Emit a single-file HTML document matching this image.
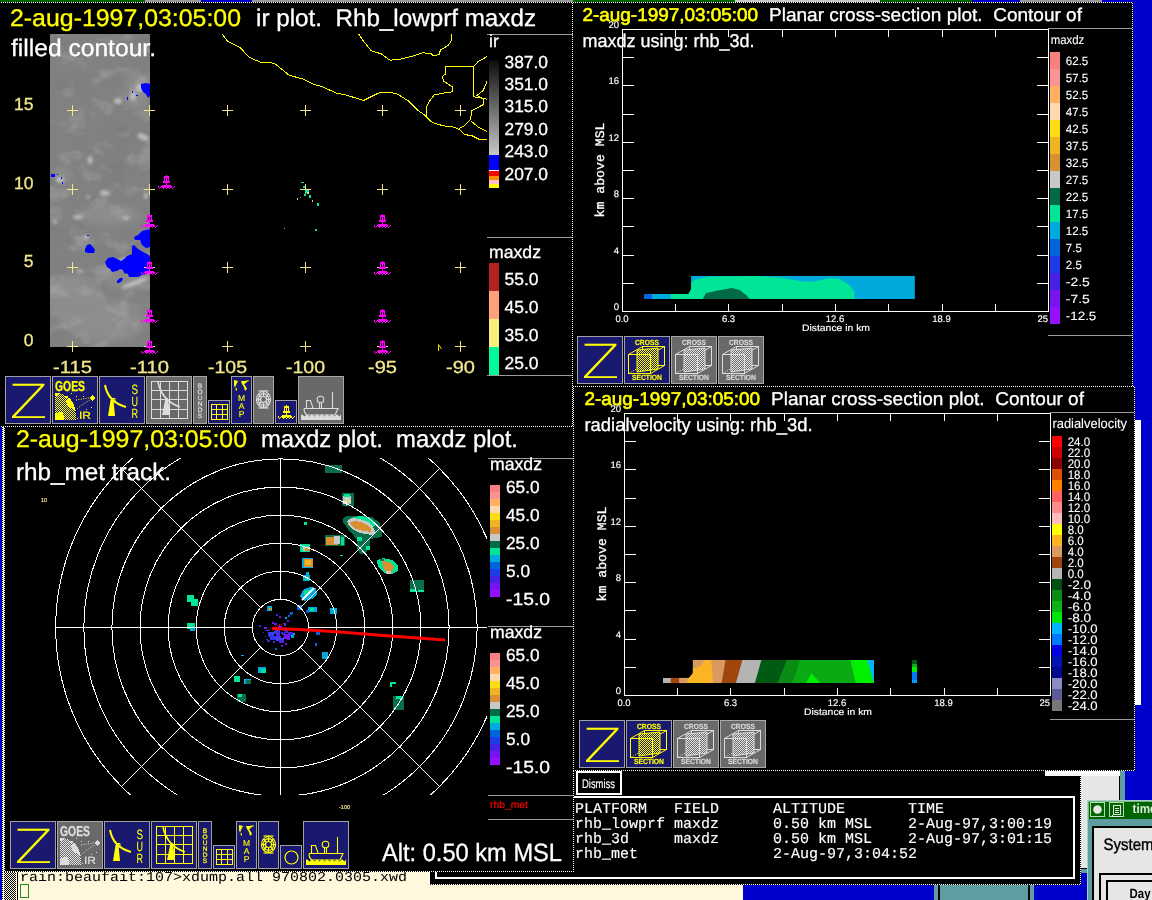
<!DOCTYPE html>
<html><head><meta charset="utf-8"><title>zeb display</title>
<style>
html,body{margin:0;padding:0;background:#0000cd;overflow:hidden}
svg{display:block;will-change:transform}
text{white-space:pre}
</style></head><body>
<svg width="1152" height="900" viewBox="0 0 1152 900" shape-rendering="crispEdges" text-rendering="geometricPrecision">
<rect x="0" y="0" width="1152" height="900" fill="#0000cd" />
<rect x="0" y="0" width="1152" height="2" fill="#9a9a9a" />
<rect x="0" y="0" width="145" height="2" fill="#006400" />
<rect x="201" y="0" width="51" height="2" fill="#0000cd" />
<rect x="573" y="0" width="162" height="2" fill="#006400" />
<rect x="735" y="0" width="145" height="2" fill="#c8c8c8" />
<rect x="880" y="0" width="92" height="2" fill="#006400" />
<rect x="972" y="0" width="48" height="2" fill="#0000cd" />
<rect x="1102" y="0" width="50" height="2" fill="#0000cd" />
<rect x="0" y="869" width="743" height="31" fill="#fff8dc" />
<defs><pattern id="stip" width="2" height="2" patternUnits="userSpaceOnUse"><rect width="2" height="2" fill="#fff8dc"/><rect x="0" y="0" width="1" height="1" fill="#000"/><rect x="1" y="1" width="1" height="1" fill="#000"/></pattern></defs>
<rect x="0" y="869" width="2" height="31" fill="#0000cd" />
<rect x="2" y="869" width="1" height="31" fill="#000" />
<line x1="2.5" x2="2.5" y1="869" y2="900" stroke="#fff" stroke-width="1" stroke-dasharray="1 1"/>
<rect x="3" y="869" width="1" height="31" fill="#fff8dc" />
<rect x="4" y="869" width="12" height="31" fill="url(#stip)" />
<rect x="17" y="869" width="1" height="31" fill="#000" />
<clipPath id="cTerm"><rect x="18" y="872" width="412" height="29"/></clipPath>
<g clip-path="url(#cTerm)"><text x="20" y="881" font-size="13.5" fill="#000" font-family='"Liberation Mono", monospace' textLength="387" lengthAdjust="spacingAndGlyphs" xml:space="preserve">rain:beaufait:107&gt;xdump.all 970802.0305.xwd</text></g>
<rect x="20.5" y="884.5" width="8" height="13" fill="none" stroke="#228b22" stroke-width="1"/>
<rect x="934" y="885" width="100" height="15" fill="#5f9ea0" />
<rect x="938" y="885" width="2" height="15" fill="#000" />
<rect x="1028" y="885" width="2" height="15" fill="#000" />
<rect x="1135" y="420" width="6" height="285" fill="#fff" />
<rect x="430" y="771" width="651" height="114" fill="#000" />
<line x1="429.5" x2="429.5" y1="872" y2="885" stroke="#fff" stroke-width="1" stroke-dasharray="1 1"/>
<line x1="429" x2="1081" y1="884.5" y2="884.5" stroke="#fff" stroke-width="1" stroke-dasharray="1 1"/>
<line x1="1080.5" x2="1080.5" y1="771" y2="885" stroke="#fff" stroke-width="1" stroke-dasharray="1 1"/>
<rect x="1045" y="771" width="77" height="5" fill="#fff" />
<rect x="435" y="796" width="640" height="2" fill="#fff" />
<rect x="435" y="877" width="640" height="2" fill="#fff" />
<rect x="435" y="796" width="2" height="83" fill="#fff" />
<rect x="1073" y="796" width="2" height="83" fill="#fff" />
<rect x="576" y="771" width="46" height="24" fill="#fff" />
<rect x="578" y="773" width="42" height="20" fill="#000" />
<text x="582" y="787.5" font-size="12.5" fill="#fff" font-family='"Liberation Sans", sans-serif' textLength="33" lengthAdjust="spacingAndGlyphs" stroke="#fff" stroke-width="0.15"  xml:space="preserve">Dismiss</text>
<text x="575" y="812.5" font-size="15" fill="#fff" font-family='"Liberation Mono", monospace' textLength="369" lengthAdjust="spacingAndGlyphs" stroke="#fff" stroke-width="0.15"  xml:space="preserve">PLATFORM   FIELD      ALTITUDE       TIME</text>
<text x="575" y="827.5" font-size="15" fill="#fff" font-family='"Liberation Mono", monospace' textLength="477" lengthAdjust="spacingAndGlyphs" stroke="#fff" stroke-width="0.15"  xml:space="preserve">rhb_lowprf maxdz      0.50 km MSL    2-Aug-97,3:00:19</text>
<text x="575" y="842.5" font-size="15" fill="#fff" font-family='"Liberation Mono", monospace' textLength="477" lengthAdjust="spacingAndGlyphs" stroke="#fff" stroke-width="0.15"  xml:space="preserve">rhb_3d     maxdz      0.50 km MSL    2-Aug-97,3:01:15</text>
<text x="575" y="857.5" font-size="15" fill="#fff" font-family='"Liberation Mono", monospace' textLength="342" lengthAdjust="spacingAndGlyphs" stroke="#fff" stroke-width="0.15"  xml:space="preserve">rhb_met               2-Aug-97,3:04:52</text>
<rect x="1081" y="776" width="39" height="92" fill="#e6e6e6" />
<rect x="1119" y="776" width="1" height="92" fill="#000" />
<rect x="1120" y="771" width="5" height="29" fill="#5f9ea0" />
<rect x="1081" y="868" width="7" height="1" fill="#000" />
<rect x="1081" y="869" width="7" height="4" fill="#5f9ea0" />
<rect x="1087" y="800" width="65" height="100" fill="#5f9ea0" />
<rect x="1087" y="800" width="65" height="1" fill="#a8d0d0" />
<rect x="1087" y="800" width="1" height="100" fill="#a8d0d0" />
<rect x="1088" y="801" width="64" height="18" fill="#006400" />
<rect x="1088" y="801" width="64" height="1" fill="#78b478" />
<rect x="1088" y="801" width="1" height="18" fill="#78b478" />
<rect x="1090.5" y="802.5" width="14" height="14" fill="none" stroke="#b4dcb4" stroke-width="1"/><circle cx="1097.5" cy="809.5" r="4.3" fill="#e6e6e6" shape-rendering="auto"/>
<rect x="1109.5" y="802.5" width="14" height="14" fill="none" stroke="#b4dcb4" stroke-width="1"/><path d="M1113.5 805.5 h7 v9 h-7z M1112 814.5 v1.5 h8.5 M1115 808 h4 M1115 810 h4 M1115 812 h4" fill="none" stroke="#e6e6e6" stroke-width="1"/>
<text x="1132.5" y="813" font-size="13" fill="#dcecdc" font-family='"Liberation Sans", sans-serif' textLength="24" lengthAdjust="spacingAndGlyphs" font-weight="bold"  xml:space="preserve">time</text>
<rect x="1092" y="826" width="60" height="74" fill="#000" />
<rect x="1094" y="828" width="58" height="72" fill="#e6e6e6" />
<text x="1103.5" y="850.3" font-size="16.5" fill="#000" font-family='"Liberation Sans", sans-serif' textLength="50" lengthAdjust="spacingAndGlyphs" stroke="#000" stroke-width="0.4"  xml:space="preserve">System</text>
<rect x="1099" y="873" width="53" height="27" fill="#000" />
<rect x="1101" y="875" width="51" height="25" fill="#e6e6e6" />
<rect x="1106" y="880" width="46" height="20" fill="#000" />
<rect x="1108" y="882" width="44" height="18" fill="#e6e6e6" />
<text x="1129.5" y="897.5" font-size="13.5" fill="#000" font-family='"Liberation Sans", sans-serif' textLength="21" lengthAdjust="spacingAndGlyphs" font-weight="bold"  xml:space="preserve">Day</text>
<rect x="0" y="2" width="573" height="424" fill="#000" />
<defs><filter id="bl1" x="-20%" y="-20%" width="140%" height="140%"><feGaussianBlur stdDeviation="1.6"/></filter><filter id="bl2" x="-20%" y="-20%" width="140%" height="140%"><feGaussianBlur stdDeviation="3.5"/></filter><clipPath id="cIR"><rect x="50" y="34" width="100" height="313"/></clipPath><clipPath id="cMap"><rect x="0" y="34" width="487" height="320"/></clipPath></defs>
<rect x="50" y="34" width="100" height="313" fill="#818181" />
<g clip-path="url(#cIR)" shape-rendering="auto">
<g filter="url(#bl2)" fill="#959595" opacity="0.6"><ellipse cx="128" cy="275" rx="26" ry="16"/><ellipse cx="75" cy="300" rx="26" ry="26"/><ellipse cx="105" cy="320" rx="40" ry="22"/><ellipse cx="135" cy="90" rx="14" ry="18"/><ellipse cx="62" cy="175" rx="10" ry="8"/><ellipse cx="110" cy="215" rx="30" ry="10"/></g>
<filter id="nz" x="0" y="0" width="100%" height="100%" color-interpolation-filters="sRGB"><feTurbulence type="fractalNoise" baseFrequency="0.045 0.06" numOctaves="4" seed="11"/><feColorMatrix type="matrix" values="0 0 0 0 0.72  0 0 0 0 0.72  0 0 0 0 0.72  2.6 0 0 0 -1.35"/></filter>
<filter id="nz2" x="0" y="0" width="100%" height="100%" color-interpolation-filters="sRGB"><feTurbulence type="fractalNoise" baseFrequency="0.03 0.04" numOctaves="3" seed="5"/><feColorMatrix type="matrix" values="0 0 0 0 0.42  0 0 0 0 0.42  0 0 0 0 0.42  -2.2 0 0 0 0.95"/></filter>
<rect x="50" y="34" width="100" height="313" filter="url(#nz2)" opacity="0.3"/>
<rect x="50" y="34" width="100" height="313" filter="url(#nz)" opacity="0.45"/>
<g filter="url(#bl1)" fill="#c4c4c4" opacity="0.85"><ellipse cx="118" cy="101" rx="4" ry="3"/><ellipse cx="133" cy="96" rx="3" ry="5"/><ellipse cx="140" cy="88" rx="4" ry="4"/><ellipse cx="143" cy="137" rx="6" ry="3" transform="rotate(25 143 137)"/><ellipse cx="90" cy="160" rx="2.5" ry="4"/><ellipse cx="60" cy="180" rx="4" ry="3"/><ellipse cx="105" cy="193" rx="5" ry="2.5"/><ellipse cx="78" cy="217" rx="5" ry="2"/><ellipse cx="88" cy="197" rx="2" ry="1.5"/><ellipse cx="126" cy="218" rx="3" ry="2"/><ellipse cx="80" cy="271" rx="3" ry="1.6"/><ellipse cx="86" cy="237" rx="3" ry="2"/><ellipse cx="122" cy="262" rx="14" ry="3" transform="rotate(-25 122 262)"/><ellipse cx="135" cy="283" rx="14" ry="2.5" transform="rotate(-20 135 283)"/><ellipse cx="146" cy="196" rx="2" ry="3"/><ellipse cx="55" cy="222" rx="2" ry="2"/></g>
<g fill="#0000ff"><path d="M141 84 L146 83 L150 84 L150 96 L148 98 L146 94 L143 92 L141 88Z"/><rect x="132" y="91" width="1" height="2"/><rect x="136" y="95" width="2" height="1"/><rect x="127" y="97" width="1" height="3"/><rect x="51" y="174" width="4" height="3"/><rect x="57" y="174" width="1" height="1"/><rect x="61" y="177" width="1" height="2"/><rect x="62" y="182" width="1" height="2"/><rect x="87" y="235" width="2" height="1"/><path d="M85 249 L87 245 L90 244 L93 247 L95 250 L94 253 L88 253 L85 252Z"/><path d="M134 237 L138 235 L142 231 L150 229 L150 247 L146 248 L142 245 L140 240 L135 240Z"/><path d="M105 262 L108 258 L113 257 L117 259 L121 261 L124 259 L127 256 L132 254 L132 246 L134 245 L138 249 L143 252 L147 254 L150 256 L150 271 L146 274 L142 275 L138 277 L133 277 L129 277 L128 274 L124 273 L123 270 L120 269 L117 271 L112 272 L110 269 L107 267Z"/><path d="M117 281 L120 278 L123 278 L122 281 L119 283 L117 283Z"/></g>
</g>
<text x="10" y="26" font-size="24" fill="#ffff00" font-family='"Liberation Sans", sans-serif' textLength="231" lengthAdjust="spacingAndGlyphs" stroke="#ffff00" stroke-width="0.3"  xml:space="preserve">2-aug-1997,03:05:00</text>
<text x="256" y="26" font-size="24" fill="#fff" font-family='"Liberation Sans", sans-serif' textLength="280" lengthAdjust="spacingAndGlyphs" stroke="#fff" stroke-width="0.3"  xml:space="preserve">ir plot.  Rhb_lowprf maxdz</text>
<text x="11" y="56" font-size="24" fill="#fff" font-family='"Liberation Sans", sans-serif' textLength="145" lengthAdjust="spacingAndGlyphs" stroke="#fff" stroke-width="0.3"  xml:space="preserve">filled contour.</text>
<g clip-path="url(#cMap)" fill="none" stroke="#ffff00" stroke-width="1" shape-rendering="crispEdges">
<polyline points="222.1,33.8 227.6,41.3 240.2,47.6 249.0,57.2 260.4,62.2 274.2,63.2 289.3,75.3 303.2,79.1 313.2,84.1 322.0,86.6 335.9,92.9 346.0,95.0 363.6,100.5 371.1,96.7 379.9,92.4 390.0,92.2 397.6,94.2 408.9,101.2 417.7,110.1 425.3,115.6 431.6,121.9 437.8,124.4 446.7,126.4 453.0,126.9 459.2,129.4 464.3,134.5 471.8,135.7 479.4,139.5 486.9,139.5"/>
<polyline points="358.5,33.8 363.6,41.3 371.1,50.6 381.2,53.9 390.0,60.2 401.3,59.0 411.4,56.4 422.7,52.7 431.6,53.9 432.8,55.7 439.1,54.7 440.4,50.1 447.9,45.6 450.9,42.1 451.7,33.8"/>
<polyline points="486.9,56.4 483.2,59.0 478.1,61.5 473.8,66.5 445.4,66.5 445.4,74.1 442.1,76.6 444.1,81.6 452.2,86.6 453.0,91.7 444.1,92.9 434.1,95.0 429.0,101.8 426.0,108.0 426.0,116.9 431.6,121.9"/>
<polyline points="473.8,66.5 473.6,96.7 480.6,98.0 486.9,99.2"/>
<polyline points="486.9,81.6 483.2,90.4 476.9,95.5 483.2,98.5 483.9,104.3 471.8,110.6 470.6,119.4 464.3,125.7 458.0,129.4"/>
<polyline points="470.6,120.6 478.1,126.9 486.9,131.5"/>
</g>
<rect x="67" y="110" width="11" height="1" fill="#f0e68c" />
<rect x="72" y="105" width="1" height="11" fill="#f0e68c" />
<rect x="67" y="189" width="11" height="1" fill="#f0e68c" />
<rect x="72" y="184" width="1" height="11" fill="#f0e68c" />
<rect x="67" y="267" width="11" height="1" fill="#f0e68c" />
<rect x="72" y="262" width="1" height="11" fill="#f0e68c" />
<rect x="67" y="346" width="11" height="1" fill="#f0e68c" />
<rect x="72" y="341" width="1" height="11" fill="#f0e68c" />
<rect x="144" y="110" width="11" height="1" fill="#f0e68c" />
<rect x="149" y="105" width="1" height="11" fill="#f0e68c" />
<rect x="144" y="189" width="11" height="1" fill="#f0e68c" />
<rect x="149" y="184" width="1" height="11" fill="#f0e68c" />
<rect x="144" y="267" width="11" height="1" fill="#f0e68c" />
<rect x="149" y="262" width="1" height="11" fill="#f0e68c" />
<rect x="144" y="346" width="11" height="1" fill="#f0e68c" />
<rect x="149" y="341" width="1" height="11" fill="#f0e68c" />
<rect x="222" y="110" width="11" height="1" fill="#f0e68c" />
<rect x="227" y="105" width="1" height="11" fill="#f0e68c" />
<rect x="222" y="189" width="11" height="1" fill="#f0e68c" />
<rect x="227" y="184" width="1" height="11" fill="#f0e68c" />
<rect x="222" y="267" width="11" height="1" fill="#f0e68c" />
<rect x="227" y="262" width="1" height="11" fill="#f0e68c" />
<rect x="222" y="346" width="11" height="1" fill="#f0e68c" />
<rect x="227" y="341" width="1" height="11" fill="#f0e68c" />
<rect x="300" y="110" width="11" height="1" fill="#f0e68c" />
<rect x="305" y="105" width="1" height="11" fill="#f0e68c" />
<rect x="300" y="189" width="11" height="1" fill="#f0e68c" />
<rect x="305" y="184" width="1" height="11" fill="#f0e68c" />
<rect x="300" y="267" width="11" height="1" fill="#f0e68c" />
<rect x="305" y="262" width="1" height="11" fill="#f0e68c" />
<rect x="300" y="346" width="11" height="1" fill="#f0e68c" />
<rect x="305" y="341" width="1" height="11" fill="#f0e68c" />
<rect x="377" y="110" width="11" height="1" fill="#f0e68c" />
<rect x="382" y="105" width="1" height="11" fill="#f0e68c" />
<rect x="377" y="189" width="11" height="1" fill="#f0e68c" />
<rect x="382" y="184" width="1" height="11" fill="#f0e68c" />
<rect x="377" y="267" width="11" height="1" fill="#f0e68c" />
<rect x="382" y="262" width="1" height="11" fill="#f0e68c" />
<rect x="377" y="346" width="11" height="1" fill="#f0e68c" />
<rect x="382" y="341" width="1" height="11" fill="#f0e68c" />
<rect x="455" y="110" width="11" height="1" fill="#f0e68c" />
<rect x="460" y="105" width="1" height="11" fill="#f0e68c" />
<rect x="455" y="189" width="11" height="1" fill="#f0e68c" />
<rect x="460" y="184" width="1" height="11" fill="#f0e68c" />
<rect x="455" y="267" width="11" height="1" fill="#f0e68c" />
<rect x="460" y="262" width="1" height="11" fill="#f0e68c" />
<rect x="455" y="346" width="11" height="1" fill="#f0e68c" />
<rect x="460" y="341" width="1" height="11" fill="#f0e68c" />
<text x="33.5" y="110" font-size="17.5" fill="#f0e68c" font-family='"Liberation Sans", sans-serif' text-anchor="end" stroke="#f0e68c" stroke-width="0.3"  xml:space="preserve">15</text>
<text x="33.5" y="189" font-size="17.5" fill="#f0e68c" font-family='"Liberation Sans", sans-serif' text-anchor="end" stroke="#f0e68c" stroke-width="0.3"  xml:space="preserve">10</text>
<text x="33.5" y="267" font-size="17.5" fill="#f0e68c" font-family='"Liberation Sans", sans-serif' text-anchor="end" stroke="#f0e68c" stroke-width="0.3"  xml:space="preserve">5</text>
<text x="33.5" y="346" font-size="17.5" fill="#f0e68c" font-family='"Liberation Sans", sans-serif' text-anchor="end" stroke="#f0e68c" stroke-width="0.3"  xml:space="preserve">0</text>
<text x="53.0" y="372.5" font-size="17.5" fill="#f0e68c" font-family='"Liberation Sans", sans-serif' textLength="39" lengthAdjust="spacingAndGlyphs" stroke="#f0e68c" stroke-width="0.3"  xml:space="preserve">-115</text>
<text x="130.0" y="372.5" font-size="17.5" fill="#f0e68c" font-family='"Liberation Sans", sans-serif' textLength="39" lengthAdjust="spacingAndGlyphs" stroke="#f0e68c" stroke-width="0.3"  xml:space="preserve">-110</text>
<text x="208.0" y="372.5" font-size="17.5" fill="#f0e68c" font-family='"Liberation Sans", sans-serif' textLength="39" lengthAdjust="spacingAndGlyphs" stroke="#f0e68c" stroke-width="0.3"  xml:space="preserve">-105</text>
<text x="286.0" y="372.5" font-size="17.5" fill="#f0e68c" font-family='"Liberation Sans", sans-serif' textLength="39" lengthAdjust="spacingAndGlyphs" stroke="#f0e68c" stroke-width="0.3"  xml:space="preserve">-100</text>
<text x="368.0" y="372.5" font-size="17.5" fill="#f0e68c" font-family='"Liberation Sans", sans-serif' textLength="29" lengthAdjust="spacingAndGlyphs" stroke="#f0e68c" stroke-width="0.3"  xml:space="preserve">-95</text>
<text x="446.0" y="372.5" font-size="17.5" fill="#f0e68c" font-family='"Liberation Sans", sans-serif' textLength="29" lengthAdjust="spacingAndGlyphs" stroke="#f0e68c" stroke-width="0.3"  xml:space="preserve">-90</text>
<g fill="#ff00ff"><rect x="166" y="175" width="1" height="1"/><rect x="164" y="176" width="5" height="5"/><rect x="163" y="181" width="7" height="2"/><rect x="166" y="183" width="1" height="2"/><rect x="162" y="185" width="9" height="1"/><rect x="161" y="186" width="11" height="1"/><rect x="158" y="186" width="1" height="2"/><rect x="159" y="188" width="1" height="1"/><rect x="160" y="187" width="1" height="1"/><rect x="162" y="187" width="2" height="1"/><rect x="163" y="188" width="1" height="1"/><rect x="164" y="187" width="2" height="1"/><rect x="166" y="188" width="1" height="1"/><rect x="167" y="187" width="2" height="1"/><rect x="169" y="188" width="1" height="1"/><rect x="170" y="187" width="2" height="1"/><rect x="172" y="188" width="1" height="1"/><rect x="173" y="187" width="1" height="1"/><rect x="174" y="186" width="1" height="1"/></g>
<rect x="165" y="178" width="1" height="3" fill="#400040"/><rect x="167" y="178" width="1" height="3" fill="#400040"/>
<g fill="#ff00ff"><rect x="149" y="214" width="1" height="1"/><rect x="147" y="215" width="5" height="5"/><rect x="146" y="220" width="7" height="2"/><rect x="149" y="222" width="1" height="2"/><rect x="145" y="224" width="9" height="1"/><rect x="144" y="225" width="11" height="1"/><rect x="141" y="225" width="1" height="2"/><rect x="142" y="227" width="1" height="1"/><rect x="143" y="226" width="1" height="1"/><rect x="145" y="226" width="2" height="1"/><rect x="146" y="227" width="1" height="1"/><rect x="147" y="226" width="2" height="1"/><rect x="149" y="227" width="1" height="1"/><rect x="150" y="226" width="2" height="1"/><rect x="152" y="227" width="1" height="1"/><rect x="153" y="226" width="2" height="1"/><rect x="155" y="227" width="1" height="1"/><rect x="156" y="226" width="1" height="1"/><rect x="157" y="225" width="1" height="1"/></g>
<rect x="148" y="217" width="1" height="3" fill="#400040"/><rect x="150" y="217" width="1" height="3" fill="#400040"/>
<g fill="#ff00ff"><rect x="149" y="261" width="1" height="1"/><rect x="147" y="262" width="5" height="5"/><rect x="146" y="267" width="7" height="2"/><rect x="149" y="269" width="1" height="2"/><rect x="145" y="271" width="9" height="1"/><rect x="144" y="272" width="11" height="1"/><rect x="141" y="272" width="1" height="2"/><rect x="142" y="274" width="1" height="1"/><rect x="143" y="273" width="1" height="1"/><rect x="145" y="273" width="2" height="1"/><rect x="146" y="274" width="1" height="1"/><rect x="147" y="273" width="2" height="1"/><rect x="149" y="274" width="1" height="1"/><rect x="150" y="273" width="2" height="1"/><rect x="152" y="274" width="1" height="1"/><rect x="153" y="273" width="2" height="1"/><rect x="155" y="274" width="1" height="1"/><rect x="156" y="273" width="1" height="1"/><rect x="157" y="272" width="1" height="1"/></g>
<rect x="148" y="264" width="1" height="3" fill="#400040"/><rect x="150" y="264" width="1" height="3" fill="#400040"/>
<g fill="#ff00ff"><rect x="149" y="309" width="1" height="1"/><rect x="147" y="310" width="5" height="5"/><rect x="146" y="315" width="7" height="2"/><rect x="149" y="317" width="1" height="2"/><rect x="145" y="319" width="9" height="1"/><rect x="144" y="320" width="11" height="1"/><rect x="141" y="320" width="1" height="2"/><rect x="142" y="322" width="1" height="1"/><rect x="143" y="321" width="1" height="1"/><rect x="145" y="321" width="2" height="1"/><rect x="146" y="322" width="1" height="1"/><rect x="147" y="321" width="2" height="1"/><rect x="149" y="322" width="1" height="1"/><rect x="150" y="321" width="2" height="1"/><rect x="152" y="322" width="1" height="1"/><rect x="153" y="321" width="2" height="1"/><rect x="155" y="322" width="1" height="1"/><rect x="156" y="321" width="1" height="1"/><rect x="157" y="320" width="1" height="1"/></g>
<rect x="148" y="312" width="1" height="3" fill="#400040"/><rect x="150" y="312" width="1" height="3" fill="#400040"/>
<g fill="#ff00ff"><rect x="149" y="340" width="1" height="1"/><rect x="147" y="341" width="5" height="5"/><rect x="146" y="346" width="7" height="2"/><rect x="149" y="348" width="1" height="2"/><rect x="145" y="350" width="9" height="1"/><rect x="144" y="351" width="11" height="1"/><rect x="141" y="351" width="1" height="2"/><rect x="142" y="353" width="1" height="1"/><rect x="143" y="352" width="1" height="1"/><rect x="145" y="352" width="2" height="1"/><rect x="146" y="353" width="1" height="1"/><rect x="147" y="352" width="2" height="1"/><rect x="149" y="353" width="1" height="1"/><rect x="150" y="352" width="2" height="1"/><rect x="152" y="353" width="1" height="1"/><rect x="153" y="352" width="2" height="1"/><rect x="155" y="353" width="1" height="1"/><rect x="156" y="352" width="1" height="1"/><rect x="157" y="351" width="1" height="1"/></g>
<rect x="148" y="343" width="1" height="3" fill="#400040"/><rect x="150" y="343" width="1" height="3" fill="#400040"/>
<g fill="#ff00ff"><rect x="382" y="214" width="1" height="1"/><rect x="380" y="215" width="5" height="5"/><rect x="379" y="220" width="7" height="2"/><rect x="382" y="222" width="1" height="2"/><rect x="378" y="224" width="9" height="1"/><rect x="377" y="225" width="11" height="1"/><rect x="374" y="225" width="1" height="2"/><rect x="375" y="227" width="1" height="1"/><rect x="376" y="226" width="1" height="1"/><rect x="378" y="226" width="2" height="1"/><rect x="379" y="227" width="1" height="1"/><rect x="380" y="226" width="2" height="1"/><rect x="382" y="227" width="1" height="1"/><rect x="383" y="226" width="2" height="1"/><rect x="385" y="227" width="1" height="1"/><rect x="386" y="226" width="2" height="1"/><rect x="388" y="227" width="1" height="1"/><rect x="389" y="226" width="1" height="1"/><rect x="390" y="225" width="1" height="1"/></g>
<rect x="381" y="217" width="1" height="3" fill="#400040"/><rect x="383" y="217" width="1" height="3" fill="#400040"/>
<g fill="#ff00ff"><rect x="382" y="261" width="1" height="1"/><rect x="380" y="262" width="5" height="5"/><rect x="379" y="267" width="7" height="2"/><rect x="382" y="269" width="1" height="2"/><rect x="378" y="271" width="9" height="1"/><rect x="377" y="272" width="11" height="1"/><rect x="374" y="272" width="1" height="2"/><rect x="375" y="274" width="1" height="1"/><rect x="376" y="273" width="1" height="1"/><rect x="378" y="273" width="2" height="1"/><rect x="379" y="274" width="1" height="1"/><rect x="380" y="273" width="2" height="1"/><rect x="382" y="274" width="1" height="1"/><rect x="383" y="273" width="2" height="1"/><rect x="385" y="274" width="1" height="1"/><rect x="386" y="273" width="2" height="1"/><rect x="388" y="274" width="1" height="1"/><rect x="389" y="273" width="1" height="1"/><rect x="390" y="272" width="1" height="1"/></g>
<rect x="381" y="264" width="1" height="3" fill="#400040"/><rect x="383" y="264" width="1" height="3" fill="#400040"/>
<g fill="#ff00ff"><rect x="382" y="309" width="1" height="1"/><rect x="380" y="310" width="5" height="5"/><rect x="379" y="315" width="7" height="2"/><rect x="382" y="317" width="1" height="2"/><rect x="378" y="319" width="9" height="1"/><rect x="377" y="320" width="11" height="1"/><rect x="374" y="320" width="1" height="2"/><rect x="375" y="322" width="1" height="1"/><rect x="376" y="321" width="1" height="1"/><rect x="378" y="321" width="2" height="1"/><rect x="379" y="322" width="1" height="1"/><rect x="380" y="321" width="2" height="1"/><rect x="382" y="322" width="1" height="1"/><rect x="383" y="321" width="2" height="1"/><rect x="385" y="322" width="1" height="1"/><rect x="386" y="321" width="2" height="1"/><rect x="388" y="322" width="1" height="1"/><rect x="389" y="321" width="1" height="1"/><rect x="390" y="320" width="1" height="1"/></g>
<rect x="381" y="312" width="1" height="3" fill="#400040"/><rect x="383" y="312" width="1" height="3" fill="#400040"/>
<g fill="#ff00ff"><rect x="382" y="340" width="1" height="1"/><rect x="380" y="341" width="5" height="5"/><rect x="379" y="346" width="7" height="2"/><rect x="382" y="348" width="1" height="2"/><rect x="378" y="350" width="9" height="1"/><rect x="377" y="351" width="11" height="1"/><rect x="374" y="351" width="1" height="2"/><rect x="375" y="353" width="1" height="1"/><rect x="376" y="352" width="1" height="1"/><rect x="378" y="352" width="2" height="1"/><rect x="379" y="353" width="1" height="1"/><rect x="380" y="352" width="2" height="1"/><rect x="382" y="353" width="1" height="1"/><rect x="383" y="352" width="2" height="1"/><rect x="385" y="353" width="1" height="1"/><rect x="386" y="352" width="2" height="1"/><rect x="388" y="353" width="1" height="1"/><rect x="389" y="352" width="1" height="1"/><rect x="390" y="351" width="1" height="1"/></g>
<rect x="381" y="343" width="1" height="3" fill="#400040"/><rect x="383" y="343" width="1" height="3" fill="#400040"/>
<rect x="301" y="182" width="3" height="1" fill="#00e696" />
<rect x="303" y="186" width="2" height="2" fill="#00e696" />
<rect x="305" y="190" width="4" height="3" fill="#00e696" />
<rect x="307" y="192" width="2" height="2" fill="#f0e68c" />
<rect x="304" y="194" width="2" height="2" fill="#00e696" />
<rect x="309" y="195" width="2" height="3" fill="#00e696" />
<rect x="297" y="198" width="1" height="2" fill="#e0d060" />
<rect x="300" y="197" width="1" height="1" fill="#00e696" />
<rect x="312" y="200" width="1" height="2" fill="#e0d060" />
<rect x="317" y="203" width="2" height="3" fill="#00e696" />
<rect x="315" y="229" width="2" height="2" fill="#00e696" />
<rect x="284" y="228" width="1" height="1" fill="#00e696" />
<path d="M438.5 351 L438.5 344.5 L441.5 349" fill="none" stroke="#ffd700" stroke-width="1" shape-rendering="auto"/>
<rect x="487" y="34" width="86" height="1" fill="#9a9a9a" />
<text x="489" y="46.5" font-size="17.5" fill="#fff" font-family='"Liberation Sans", sans-serif' stroke="#fff" stroke-width="0.3"  xml:space="preserve">ir</text>
<defs><linearGradient id="gIR" x1="0" y1="0" x2="0" y2="1"><stop offset="0" stop-color="#0c0c0c"/><stop offset="1" stop-color="#c8c8c8"/></linearGradient></defs>
<rect x="489" y="60" width="10" height="95" fill="url(#gIR)" />
<rect x="489" y="155" width="10" height="15" fill="#0000ff" />
<rect x="489" y="170" width="10" height="1" fill="#fff" />
<rect x="489" y="171" width="10" height="5" fill="#ff0000" />
<rect x="489" y="176" width="10" height="4" fill="#ff8c00" />
<rect x="489" y="180" width="10" height="4" fill="#ffc0cb" />
<rect x="489" y="184" width="10" height="4" fill="#ffff00" />
<text x="504.5" y="67.5" font-size="17.5" fill="#fff" font-family='"Liberation Sans", sans-serif' textLength="43.5" lengthAdjust="spacingAndGlyphs" stroke="#fff" stroke-width="0.3"  xml:space="preserve">387.0</text>
<text x="504.5" y="89.9" font-size="17.5" fill="#fff" font-family='"Liberation Sans", sans-serif' textLength="43.5" lengthAdjust="spacingAndGlyphs" stroke="#fff" stroke-width="0.3"  xml:space="preserve">351.0</text>
<text x="504.5" y="112.3" font-size="17.5" fill="#fff" font-family='"Liberation Sans", sans-serif' textLength="43.5" lengthAdjust="spacingAndGlyphs" stroke="#fff" stroke-width="0.3"  xml:space="preserve">315.0</text>
<text x="504.5" y="134.7" font-size="17.5" fill="#fff" font-family='"Liberation Sans", sans-serif' textLength="43.5" lengthAdjust="spacingAndGlyphs" stroke="#fff" stroke-width="0.3"  xml:space="preserve">279.0</text>
<text x="504.5" y="157.1" font-size="17.5" fill="#fff" font-family='"Liberation Sans", sans-serif' textLength="43.5" lengthAdjust="spacingAndGlyphs" stroke="#fff" stroke-width="0.3"  xml:space="preserve">243.0</text>
<text x="504.5" y="179.5" font-size="17.5" fill="#fff" font-family='"Liberation Sans", sans-serif' textLength="43.5" lengthAdjust="spacingAndGlyphs" stroke="#fff" stroke-width="0.3"  xml:space="preserve">207.0</text>
<rect x="487" y="237" width="86" height="1" fill="#9a9a9a" />
<text x="489" y="257.5" font-size="17.5" fill="#fff" font-family='"Liberation Sans", sans-serif' textLength="52" lengthAdjust="spacingAndGlyphs" stroke="#fff" stroke-width="0.3"  xml:space="preserve">maxdz</text>
<rect x="489" y="263" width="10" height="28" fill="#b22222" />
<rect x="489" y="291" width="10" height="28" fill="#ffa07a" />
<rect x="489" y="319" width="10" height="28" fill="#f7f07a" />
<rect x="489" y="347" width="10" height="28" fill="#00fa9a" />
<text x="504.5" y="285" font-size="17.5" fill="#fff" font-family='"Liberation Sans", sans-serif' textLength="34" lengthAdjust="spacingAndGlyphs" stroke="#fff" stroke-width="0.3"  xml:space="preserve">55.0</text>
<text x="504.5" y="313" font-size="17.5" fill="#fff" font-family='"Liberation Sans", sans-serif' textLength="34" lengthAdjust="spacingAndGlyphs" stroke="#fff" stroke-width="0.3"  xml:space="preserve">45.0</text>
<text x="504.5" y="341" font-size="17.5" fill="#fff" font-family='"Liberation Sans", sans-serif' textLength="34" lengthAdjust="spacingAndGlyphs" stroke="#fff" stroke-width="0.3"  xml:space="preserve">35.0</text>
<text x="504.5" y="369" font-size="17.5" fill="#fff" font-family='"Liberation Sans", sans-serif' textLength="34" lengthAdjust="spacingAndGlyphs" stroke="#fff" stroke-width="0.3"  xml:space="preserve">25.0</text>
<rect x="487" y="375" width="86" height="1" fill="#9a9a9a" />
<defs><pattern id="ditY" width="2" height="2" patternUnits="userSpaceOnUse"><rect x="0" y="0" width="1" height="1" fill="#ffff00"/><rect x="1" y="1" width="1" height="1" fill="#ffff00"/></pattern><pattern id="ditG" width="2" height="2" patternUnits="userSpaceOnUse"><rect x="0" y="0" width="1" height="1" fill="#e6e6e6"/><rect x="1" y="1" width="1" height="1" fill="#e6e6e6"/></pattern><pattern id="ditK" width="2" height="2" patternUnits="userSpaceOnUse"><rect x="0" y="0" width="1" height="1" fill="#000"/><rect x="1" y="1" width="1" height="1" fill="#000"/></pattern></defs>
<rect x="5" y="376" width="46" height="48" fill="#a0a0a4" />
<rect x="6" y="377" width="44" height="46" fill="#191970" />
<text transform="translate(9.5,417.5) scale(1.18,1)" font-size="47" font-weight="200" fill="#ffff00" font-family='"DejaVu Sans", "Liberation Sans", sans-serif'>Z</text>
<rect x="52" y="376" width="46" height="48" fill="#a0a0a4" />
<rect x="53" y="377" width="44" height="46" fill="#191970" />
<text x="55" y="391" font-size="14.5" fill="#ffff00" font-family='"Liberation Sans", sans-serif' textLength="30" lengthAdjust="spacingAndGlyphs" font-weight="bold" stroke="#ffff00" stroke-width="0.3"  xml:space="preserve">GOES</text>
<path d="M55 393 L60 393 A 22 26 0 0 1 76 420 L55 420Z" fill="url(#ditY)"/>
<g fill="#ffff00"><path d="M55 413 L63 412 L64 420 L55 420Z"/><path d="M66 401 L70 398 L73 403 L76 411 L72 408 L68 407Z"/><path d="M55 393 L60 393 L57 397 L55 396Z"/><path d="M65 396 L68 396 L67 400Z"/></g>
<path d="M89 398 L92 395 L95 398 L92 401Z" fill="#ffff00"/>
<path d="M76 400 L89 398" stroke="#ffff00" stroke-width="1" stroke-dasharray="1 1.4" fill="none" shape-rendering="auto"/>
<path d="M77 409 Q84 403 90 400" stroke="#ffff00" stroke-width="1" stroke-dasharray="1 1.4" fill="none" shape-rendering="auto"/>
<rect x="71" y="393" width="1" height="1" fill="#ffff00" />
<rect x="76" y="396" width="1" height="1" fill="#ffff00" />
<rect x="83" y="396" width="1" height="1" fill="#ffff00" />
<rect x="86" y="409" width="1" height="1" fill="#ffff00" />
<rect x="91" y="407" width="1" height="1" fill="#ffff00" />
<rect x="77" y="418" width="1" height="1" fill="#ffff00" />
<text x="79" y="419" font-size="10.5" fill="#ffff00" font-family='"Liberation Sans", sans-serif' textLength="12" lengthAdjust="spacingAndGlyphs" stroke="#ffff00" stroke-width="0.2"  xml:space="preserve">IR</text>
<rect x="99" y="376" width="46" height="48" fill="#a0a0a4" />
<rect x="100" y="377" width="44" height="46" fill="#191970" />
<g shape-rendering="auto"><path d="M105 385 Q108 402 126 407" stroke="#ffff00" stroke-width="2" fill="none"/><path d="M110.5 400 L113.5 400 L115 416 L108 416Z" fill="#ffff00"/><path d="M111 398.5 L115 398.5 L115 403" stroke="#ffff00" stroke-width="1" fill="none"/></g>
<text x="131.5" y="393.5" font-size="13.5" fill="#ffff00" font-family='"Liberation Sans", sans-serif' textLength="6.5" lengthAdjust="spacingAndGlyphs" stroke="#ffff00" stroke-width="0.1"  xml:space="preserve">S</text>
<text x="131.5" y="405.8" font-size="13.5" fill="#ffff00" font-family='"Liberation Sans", sans-serif' textLength="6.5" lengthAdjust="spacingAndGlyphs" stroke="#ffff00" stroke-width="0.1"  xml:space="preserve">U</text>
<text x="131.5" y="418.1" font-size="13.5" fill="#ffff00" font-family='"Liberation Sans", sans-serif' textLength="6.5" lengthAdjust="spacingAndGlyphs" stroke="#ffff00" stroke-width="0.1"  xml:space="preserve">R</text>
<rect x="146" y="376" width="46" height="48" fill="#a8a8a8" />
<rect x="147" y="377" width="44" height="46" fill="#696969" />
<rect x="151" y="381" width="1" height="38" fill="#dcdcdc" />
<rect x="160" y="381" width="1" height="38" fill="#dcdcdc" />
<rect x="169" y="381" width="1" height="38" fill="#dcdcdc" />
<rect x="178" y="381" width="1" height="38" fill="#dcdcdc" />
<rect x="187" y="381" width="1" height="38" fill="#dcdcdc" />
<rect x="151" y="381" width="37" height="1" fill="#dcdcdc" />
<rect x="151" y="390" width="37" height="1" fill="#dcdcdc" />
<rect x="151" y="399" width="37" height="1" fill="#dcdcdc" />
<rect x="151" y="409" width="37" height="1" fill="#dcdcdc" />
<rect x="151" y="418" width="37" height="1" fill="#dcdcdc" />
<g shape-rendering="auto"><path d="M158 382 Q162 401 180 407" stroke="#dcdcdc" stroke-width="1.6" fill="none"/><path d="M165.5 398 L168 398 L170 415 L162 415Z" fill="#dcdcdc"/></g>
<rect x="193" y="376" width="14" height="48" fill="#a8a8a8" />
<rect x="194" y="377" width="12" height="46" fill="#696969" />
<text x="200" y="387.5" font-size="6.5" fill="#dcdcdc" font-family='"Liberation Sans", sans-serif' text-anchor="middle" stroke="#dcdcdc" stroke-width="0.25"  xml:space="preserve">B</text>
<text x="200" y="393.5" font-size="6.5" fill="#dcdcdc" font-family='"Liberation Sans", sans-serif' text-anchor="middle" stroke="#dcdcdc" stroke-width="0.25"  xml:space="preserve">O</text>
<text x="200" y="399.5" font-size="6.5" fill="#dcdcdc" font-family='"Liberation Sans", sans-serif' text-anchor="middle" stroke="#dcdcdc" stroke-width="0.25"  xml:space="preserve">U</text>
<text x="200" y="405.5" font-size="6.5" fill="#dcdcdc" font-family='"Liberation Sans", sans-serif' text-anchor="middle" stroke="#dcdcdc" stroke-width="0.25"  xml:space="preserve">N</text>
<text x="200" y="411.5" font-size="6.5" fill="#dcdcdc" font-family='"Liberation Sans", sans-serif' text-anchor="middle" stroke="#dcdcdc" stroke-width="0.25"  xml:space="preserve">D</text>
<text x="200" y="417.5" font-size="6.5" fill="#dcdcdc" font-family='"Liberation Sans", sans-serif' text-anchor="middle" stroke="#dcdcdc" stroke-width="0.25"  xml:space="preserve">S</text>
<rect x="208" y="400" width="22" height="24" fill="#a0a0a4" />
<rect x="209" y="401" width="20" height="22" fill="#191970" />
<rect x="211" y="404" width="1" height="16" fill="#ffff00" />
<rect x="216" y="404" width="1" height="16" fill="#ffff00" />
<rect x="222" y="404" width="1" height="16" fill="#ffff00" />
<rect x="227" y="404" width="1" height="16" fill="#ffff00" />
<rect x="211" y="404" width="17" height="1" fill="#ffff00" />
<rect x="211" y="409" width="17" height="1" fill="#ffff00" />
<rect x="211" y="414" width="17" height="1" fill="#ffff00" />
<rect x="211" y="419" width="17" height="1" fill="#ffff00" />
<rect x="231" y="376" width="21" height="48" fill="#a0a0a4" />
<rect x="232" y="377" width="19" height="46" fill="#191970" />
<g fill="#ffff00" shape-rendering="auto"><path d="M234 380 L238 381 L236 385 L235 388 L234 385Z"/><path d="M235 389 L237 388 L237 391Z"/><path d="M241 381 L245 381 L248 380 L246 383 L244 384 L246 387 L247 389 L245 391 L244 387 L242 384Z"/><path d="M247 381 L249 380 L248 382Z"/></g>
<text x="241.5" y="401" font-size="8.5" fill="#ffff00" font-family='"Liberation Sans", sans-serif' text-anchor="middle" stroke="#ffff00" stroke-width="0.1"  xml:space="preserve">M</text>
<text x="241.5" y="409" font-size="8.5" fill="#ffff00" font-family='"Liberation Sans", sans-serif' text-anchor="middle" stroke="#ffff00" stroke-width="0.1"  xml:space="preserve">A</text>
<text x="241.5" y="417" font-size="8.5" fill="#ffff00" font-family='"Liberation Sans", sans-serif' text-anchor="middle" stroke="#ffff00" stroke-width="0.1"  xml:space="preserve">P</text>
<rect x="253" y="376" width="21" height="48" fill="#a8a8a8" />
<rect x="254" y="377" width="19" height="46" fill="#696969" />
<g shape-rendering="auto" stroke="#dcdcdc" fill="none" stroke-width="1.2"><ellipse cx="263.5" cy="399.5" rx="7" ry="8"/><circle cx="263.5" cy="399.5" r="3"/><ellipse cx="263.5" cy="399.5" rx="5.2" ry="5.8"/><line x1="266.5" y1="399.5" x2="270.5" y2="399.5"/><line x1="265.6" y1="401.6" x2="268.4" y2="405.2"/><line x1="263.5" y1="402.5" x2="263.5" y2="407.5"/><line x1="261.4" y1="401.6" x2="258.6" y2="405.2"/><line x1="260.5" y1="399.5" x2="256.5" y2="399.5"/><line x1="261.4" y1="397.4" x2="258.6" y2="393.8"/><line x1="263.5" y1="396.5" x2="263.5" y2="391.5"/><line x1="265.6" y1="397.4" x2="268.4" y2="393.8"/><line x1="258.5" y1="391.0" x2="268.5" y2="391.0"/><line x1="258.5" y1="408.0" x2="268.5" y2="408.0"/></g>
<rect x="275" y="400" width="22" height="24" fill="#a0a0a4" />
<rect x="276" y="401" width="20" height="22" fill="#191970" />
<g fill="#ffff00"><rect x="286" y="405" width="1" height="1"/><rect x="284" y="406" width="5" height="5"/><rect x="283" y="411" width="7" height="2"/><rect x="286" y="413" width="1" height="2"/><rect x="282" y="415" width="9" height="1"/><rect x="281" y="416" width="11" height="1"/><rect x="278" y="416" width="1" height="2"/><rect x="279" y="418" width="1" height="1"/><rect x="280" y="417" width="1" height="1"/><rect x="282" y="417" width="2" height="1"/><rect x="283" y="418" width="1" height="1"/><rect x="284" y="417" width="2" height="1"/><rect x="286" y="418" width="1" height="1"/><rect x="287" y="417" width="2" height="1"/><rect x="289" y="418" width="1" height="1"/><rect x="290" y="417" width="2" height="1"/><rect x="292" y="418" width="1" height="1"/><rect x="293" y="417" width="1" height="1"/><rect x="294" y="416" width="1" height="1"/></g>
<rect x="285" y="408" width="1" height="3" fill="#400040"/><rect x="287" y="408" width="1" height="3" fill="#400040"/>
<rect x="298" y="376" width="46" height="48" fill="#a8a8a8" />
<rect x="299" y="377" width="44" height="46" fill="#696969" />
<g shape-rendering="auto" stroke="#dcdcdc" fill="none" stroke-width="1.1"><path d="M304 408.5 L338 408.5 L335 415 L307 415 Q304 413 304 408.5"/><path d="M306.5 408 L306.5 400.5 L310.5 400.5 L313 408"/><circle cx="320.5" cy="399.5" r="3.3"/><path d="M319.5 403 V408 M321.5 403 V408"/><path d="M332.5 392 V408"/></g>
<path d="M301 420 L301 415 L302 414.2 L304.5 416.5 L307 414.2 L309.5 416.5 L312 414.2 L314.5 416.5 L317 414.2 L319.5 416.5 L322 414.2 L324.5 416.5 L327 414.2 L329.5 416.5 L332 414.2 L334.5 416.5 L337 414.2 L339.5 416.5 L341 414.2 L341 420Z" fill="#dcdcdc" shape-rendering="auto"/>
<line x1="1" x2="573" y1="2.5" y2="2.5" stroke="#fff" stroke-width="1" stroke-dasharray="1 1"/>
<line x1="572.5" x2="572.5" y1="3" y2="427" stroke="#fff" stroke-width="1" stroke-dasharray="1 1"/>
<line x1="1" x2="573" y1="426.5" y2="426.5" stroke="#fff" stroke-width="1" stroke-dasharray="1 1"/>
<rect x="0" y="426" width="574" height="446" fill="#000" />
<defs><clipPath id="cRad"><rect x="5" y="458" width="482" height="337"/></clipPath></defs>
<rect x="325" y="465" width="17" height="8" fill="#0a6e4a" />
<rect x="342" y="493" width="12" height="13" fill="#0a6e4a" />
<rect x="343" y="496" width="8" height="8" fill="#c8c8c8" />
<rect x="344" y="494" width="6" height="3" fill="#00e696" />
<path d="M346 497 v9 M342 501 h9" stroke="#f0e68c" stroke-width="1" fill="none"/>
<path d="M343 518 L347 516 L360 516 L372 517 L379 522 L382 530 L382 537 L376 538 L370 539 L370 546 L366 553 L360 554 L357 548 L357 540 L354 536 L350 532 L346 526 L343 522Z" fill="#0a6e4a"/>
<path d="M352 517 L362 516 L372 519 L376 524 L374 527 L366 522 L356 521Z" fill="#00e696"/>
<path d="M347 521 L352 518 L360 519 L368 522 L373 527 L376 533 L372 535 L366 534 L360 533 L354 530 L349 526Z" fill="#c8c8c8"/>
<path d="M349 523 L354 521 L361 522 L367 525 L371 529 L371 532 L365 531 L359 530 L354 528Z" fill="#da9030"/>
<rect x="357" y="537" width="5" height="4" fill="#00e696" />
<rect x="366" y="546" width="4" height="4" fill="#00e696" />
<rect x="325" y="535" width="20" height="11" fill="#0a6e4a" />
<rect x="326" y="537" width="12" height="8" fill="#da9030" />
<rect x="334" y="536" width="6" height="8" fill="#c8c8c8" />
<rect x="341" y="537" width="3" height="8" fill="#00e696" />
<rect x="304" y="522" width="3" height="3" fill="#00e696" />
<rect x="340" y="555" width="3" height="1" fill="#00e696" />
<rect x="300" y="544" width="10" height="8" fill="#00e696" />
<rect x="303" y="547" width="7" height="4" fill="#c8c8c8" />
<rect x="305" y="548" width="5" height="3" fill="#da9030" />
<rect x="302" y="558" width="11" height="10" fill="#00aadc" />
<rect x="304" y="559" width="9" height="8" fill="#da9030" />
<rect x="305" y="560" width="6" height="5" fill="#eeb422" />
<rect x="306" y="572" width="3" height="3" fill="#00aadc" />
<rect x="303" y="575" width="7" height="6" fill="#00aadc" />
<rect x="305" y="577" width="4" height="3" fill="#00e696" />
<path d="M377 560 L383 558 L392 560 L398 565 L398 571 L392 574 L384 573 L378 567Z" fill="#00e696"/>
<path d="M382 561 L390 562 L394 567 L392 573 L386 572 L383 567Z" fill="#da9030"/>
<rect x="386" y="571" width="5" height="3" fill="#c8c8c8" />
<rect x="380" y="559" width="4" height="2" fill="#0a6e4a" />
<rect x="410" y="580" width="14" height="12" fill="#0a6e4a" />
<rect x="410" y="589" width="6" height="3" fill="#00e696" />
<rect x="418" y="590" width="6" height="2" fill="#00e696" />
<path d="M300 596 L303 590 L310 587 L316 588 L317 594 L312 599 L304 601Z" fill="#00aadc"/>
<rect x="304" y="590" width="6" height="5" fill="#00e696" />
<path d="M302 600 L314 588" stroke="#fff" stroke-width="2" fill="none" shape-rendering="auto"/>
<rect x="308" y="607" width="9" height="5" fill="#00aadc" />
<rect x="310" y="608" width="4" height="3" fill="#00e696" />
<rect x="330" y="608" width="7" height="6" fill="#00aadc" />
<rect x="297" y="605" width="5" height="5" fill="#0064dc" />
<rect x="267" y="606" width="5" height="5" fill="#00aadc" />
<rect x="269" y="608" width="3" height="2" fill="#da9030" />
<rect x="290" y="612" width="3" height="2" fill="#0064dc" />
<rect x="288" y="615" width="2" height="2" fill="#0064dc" />
<rect x="306" y="610" width="3" height="3" fill="#0064dc" />
<path d="M187 595 L194 595 L194 599 L198 599 L198 606 L191 606 L191 602 L187 602Z" fill="#00e696"/>
<rect x="187" y="623" width="8" height="6" fill="#00e696" />
<rect x="190" y="628" width="5" height="3" fill="#00aadc" />
<rect x="272" y="639" width="1" height="1" fill="#7814f0" />
<rect x="265" y="630" width="2" height="1" fill="#1e3ce6" />
<rect x="272" y="635" width="3" height="1" fill="#4620e6" />
<rect x="277" y="635" width="2" height="1" fill="#4620e6" />
<rect x="270" y="632" width="2" height="2" fill="#1e3ce6" />
<rect x="277" y="635" width="1" height="2" fill="#4620e6" />
<rect x="278" y="631" width="2" height="2" fill="#1e3ce6" />
<rect x="263" y="632" width="1" height="1" fill="#4620e6" />
<rect x="277" y="637" width="2" height="3" fill="#4620e6" />
<rect x="285" y="631" width="2" height="2" fill="#4620e6" />
<rect x="277" y="633" width="2" height="3" fill="#7814f0" />
<rect x="275" y="630" width="2" height="1" fill="#1e3ce6" />
<rect x="271" y="634" width="3" height="3" fill="#1e3ce6" />
<rect x="284" y="633" width="1" height="2" fill="#7814f0" />
<rect x="272" y="628" width="3" height="1" fill="#1e3ce6" />
<rect x="284" y="632" width="3" height="1" fill="#1e3ce6" />
<rect x="275" y="631" width="3" height="2" fill="#3c3cf0" />
<rect x="266" y="639" width="2" height="1" fill="#1e3ce6" />
<rect x="270" y="638" width="2" height="2" fill="#4620e6" />
<rect x="275" y="630" width="3" height="3" fill="#1e3ce6" />
<rect x="288" y="637" width="2" height="3" fill="#4620e6" />
<rect x="275" y="636" width="3" height="2" fill="#3c3cf0" />
<rect x="281" y="632" width="2" height="2" fill="#4620e6" />
<rect x="275" y="633" width="1" height="3" fill="#4620e6" />
<rect x="277" y="635" width="2" height="2" fill="#4620e6" />
<rect x="274" y="631" width="1" height="3" fill="#3c3cf0" />
<rect x="279" y="629" width="1" height="3" fill="#3c3cf0" />
<rect x="270" y="636" width="2" height="1" fill="#4620e6" />
<rect x="265" y="636" width="1" height="1" fill="#4620e6" />
<rect x="282" y="638" width="1" height="2" fill="#4620e6" />
<rect x="287" y="635" width="2" height="2" fill="#7814f0" />
<rect x="267" y="630" width="3" height="1" fill="#1e3ce6" />
<rect x="283" y="629" width="3" height="2" fill="#1e3ce6" />
<rect x="276" y="634" width="2" height="2" fill="#1e3ce6" />
<rect x="277" y="633" width="2" height="2" fill="#3c3cf0" />
<rect x="274" y="634" width="1" height="2" fill="#3c3cf0" />
<rect x="278" y="633" width="2" height="2" fill="#7814f0" />
<rect x="277" y="630" width="2" height="2" fill="#4620e6" />
<rect x="284" y="623" width="2" height="3" fill="#3c3cf0" />
<rect x="277" y="633" width="2" height="3" fill="#7814f0" />
<rect x="274" y="623" width="3" height="2" fill="#4620e6" />
<rect x="276" y="633" width="2" height="3" fill="#3c3cf0" />
<rect x="286" y="634" width="2" height="1" fill="#4620e6" />
<rect x="273" y="634" width="2" height="2" fill="#1e3ce6" />
<rect x="264" y="627" width="3" height="2" fill="#3c3cf0" />
<rect x="287" y="637" width="1" height="3" fill="#3c3cf0" />
<rect x="276" y="630" width="2" height="1" fill="#3c3cf0" />
<rect x="275" y="634" width="3" height="1" fill="#3c3cf0" />
<rect x="277" y="635" width="3" height="2" fill="#4620e6" />
<rect x="276" y="634" width="3" height="2" fill="#4620e6" />
<rect x="275" y="634" width="1" height="2" fill="#1e3ce6" />
<rect x="277" y="634" width="2" height="2" fill="#1e3ce6" />
<rect x="276" y="635" width="2" height="2" fill="#4620e6" />
<rect x="269" y="636" width="2" height="1" fill="#3c3cf0" />
<rect x="267" y="640" width="3" height="2" fill="#4620e6" />
<rect x="278" y="636" width="1" height="3" fill="#4620e6" />
<rect x="275" y="634" width="2" height="3" fill="#4620e6" />
<rect x="275" y="631" width="1" height="2" fill="#3c3cf0" />
<rect x="258" y="633" width="1" height="1" fill="#4620e6" />
<rect x="278" y="637" width="1" height="1" fill="#4620e6" />
<rect x="254" y="638" width="1" height="3" fill="#7814f0" />
<rect x="273" y="633" width="2" height="2" fill="#1e3ce6" />
<rect x="271" y="634" width="2" height="2" fill="#4620e6" />
<rect x="286" y="630" width="2" height="3" fill="#4620e6" />
<rect x="270" y="636" width="2" height="3" fill="#1e3ce6" />
<rect x="277" y="637" width="2" height="1" fill="#4620e6" />
<rect x="282" y="633" width="2" height="2" fill="#1e3ce6" />
<rect x="278" y="638" width="1" height="3" fill="#1e3ce6" />
<rect x="278" y="636" width="3" height="3" fill="#7814f0" />
<rect x="270" y="636" width="2" height="2" fill="#1e3ce6" />
<rect x="259" y="625" width="2" height="2" fill="#4620e6" />
<rect x="264" y="627" width="2" height="2" fill="#7814f0" />
<rect x="272" y="622" width="2" height="2" fill="#7814f0" />
<rect x="279" y="616" width="2" height="2" fill="#7814f0" />
<rect x="285" y="617" width="2" height="2" fill="#00aadc" />
<rect x="287" y="620" width="2" height="2" fill="#7814f0" />
<rect x="290" y="613" width="2" height="2" fill="#0064dc" />
<rect x="293" y="633" width="2" height="2" fill="#00aadc" />
<rect x="276" y="614" width="2" height="2" fill="#4620e6" />
<rect x="273" y="641" width="2" height="2" fill="#4620e6" />
<rect x="281" y="645" width="2" height="2" fill="#4620e6" />
<rect x="275" y="648" width="2" height="2" fill="#0064dc" />
<rect x="285" y="643" width="2" height="2" fill="#7814f0" />
<rect x="268" y="632" width="7" height="4" fill="#3c3cf0" />
<rect x="270" y="635" width="9" height="5" fill="#3232f0" />
<rect x="276" y="637" width="8" height="4" fill="#4040f0" />
<rect x="279" y="640" width="5" height="3" fill="#4620e6" />
<rect x="284" y="634" width="6" height="5" fill="#7814f0" />
<rect x="288" y="632" width="5" height="4" fill="#4620e6" />
<rect x="291" y="635" width="3" height="3" fill="#00aadc" />
<rect x="274" y="634" width="2" height="2" fill="#000" />
<rect x="281" y="636" width="2" height="2" fill="#000" />
<rect x="278" y="626" width="4" height="3" fill="#7814f0" />
<rect x="276" y="628" width="3" height="2" fill="#ff00ff" />
<rect x="316" y="632" width="4" height="3" fill="#0064dc" />
<rect x="315" y="643" width="2" height="3" fill="#0064dc" />
<rect x="322" y="652" width="6" height="7" fill="#00aadc" />
<rect x="241" y="655" width="3" height="1" fill="#00aadc" />
<rect x="258" y="667" width="8" height="6" fill="#00aadc" />
<rect x="261" y="669" width="5" height="4" fill="#00e696" />
<rect x="234" y="676" width="6" height="6" fill="#00e696" />
<rect x="244" y="679" width="7" height="5" fill="#00aadc" />
<rect x="246" y="680" width="5" height="4" fill="#0a6e4a" />
<rect x="237" y="694" width="9" height="8" fill="#0a6e4a" />
<rect x="238" y="694" width="4" height="3" fill="#00e696" />
<rect x="390" y="682" width="6" height="5" fill="#00e696" />
<rect x="392" y="684" width="4" height="3" fill="#000" />
<rect x="393" y="696" width="11" height="14" fill="#0a6e4a" />
<rect x="396" y="696" width="7" height="3" fill="#00e696" />
<g clip-path="url(#cRad)" fill="none" stroke="#fff" stroke-width="1" shape-rendering="crispEdges">
<circle cx="280.5" cy="627.5" r="28.1"/>
<circle cx="280.5" cy="627.5" r="56.2"/>
<circle cx="280.5" cy="627.5" r="84.3"/>
<circle cx="280.5" cy="627.5" r="112.4"/>
<circle cx="280.5" cy="627.5" r="140.5"/>
<circle cx="280.5" cy="627.5" r="168.6"/>
<circle cx="280.5" cy="627.5" r="196.7"/>
<circle cx="280.5" cy="627.5" r="224.8"/>
<line x1="260.6" y1="607.6" x2="121.4" y2="468.4"/>
<line x1="260.6" y1="647.4" x2="121.4" y2="786.6"/>
<line x1="300.4" y1="607.6" x2="439.6" y2="468.4"/>
<line x1="300.4" y1="647.4" x2="439.6" y2="786.6"/>
</g>
<rect x="280" y="458" width="1" height="141" fill="#fff" />
<rect x="280" y="656" width="1" height="139" fill="#fff" />
<rect x="55" y="627" width="197" height="1" fill="#fff" />
<rect x="309" y="627" width="178" height="1" fill="#fff" />
<path d="M272 628.5 L300 629.5 L340 632 L390 636 L445 640" stroke="#ff0000" stroke-width="3.2" fill="none" shape-rendering="auto"/>
<path d="M268 630 L284 623" stroke="#ff0000" stroke-width="1" stroke-dasharray="1 1" fill="none"/>
<text x="16" y="447" font-size="24" fill="#ffff00" font-family='"Liberation Sans", sans-serif' textLength="231" lengthAdjust="spacingAndGlyphs" stroke="#ffff00" stroke-width="0.3"  xml:space="preserve">2-aug-1997,03:05:00</text>
<text x="261" y="447" font-size="24" fill="#fff" font-family='"Liberation Sans", sans-serif' textLength="257" lengthAdjust="spacingAndGlyphs" stroke="#fff" stroke-width="0.3"  xml:space="preserve">maxdz plot.  maxdz plot.</text>
<text x="16" y="479.5" font-size="24" fill="#fff" font-family='"Liberation Sans", sans-serif' textLength="155" lengthAdjust="spacingAndGlyphs" stroke="#fff" stroke-width="0.3"  xml:space="preserve">rhb_met track.</text>
<text x="41" y="502" font-size="5.5" fill="#f0e68c" font-family='"Liberation Sans", sans-serif' stroke="#f0e68c" stroke-width="0.2"  xml:space="preserve">10</text>
<text x="339" y="809" font-size="5.5" fill="#f0e68c" font-family='"Liberation Sans", sans-serif' stroke="#f0e68c" stroke-width="0.2"  xml:space="preserve">-100</text>
<rect x="488" y="458" width="86" height="1" fill="#9a9a9a" />
<text x="490" y="469.5" font-size="17.5" fill="#fff" font-family='"Liberation Sans", sans-serif' textLength="52" lengthAdjust="spacingAndGlyphs" stroke="#fff" stroke-width="0.3"  xml:space="preserve">maxdz</text>
<rect x="490" y="485" width="10" height="7" fill="#fa8080" />
<rect x="490" y="492" width="10" height="7" fill="#fc9496" />
<rect x="490" y="499" width="10" height="7" fill="#ffb060" />
<rect x="490" y="506" width="10" height="7" fill="#fdd8b0" />
<rect x="490" y="513" width="10" height="7" fill="#fcdc14" />
<rect x="490" y="520" width="10" height="7" fill="#eeb422" />
<rect x="490" y="527" width="10" height="7" fill="#da9030" />
<rect x="490" y="534" width="10" height="7" fill="#c8c8c8" />
<rect x="490" y="541" width="10" height="7" fill="#006a48" />
<rect x="490" y="548" width="10" height="7" fill="#00e696" />
<rect x="490" y="555" width="10" height="7" fill="#00aadc" />
<rect x="490" y="562" width="10" height="7" fill="#0064dc" />
<rect x="490" y="569" width="10" height="7" fill="#1e3ce6" />
<rect x="490" y="576" width="10" height="7" fill="#4620e6" />
<rect x="490" y="583" width="10" height="7" fill="#7814f0" />
<rect x="490" y="590" width="10" height="7" fill="#9610ff" />
<text x="506" y="493" font-size="17.5" fill="#fff" font-family='"Liberation Sans", sans-serif' textLength="33.5" lengthAdjust="spacingAndGlyphs" stroke="#fff" stroke-width="0.3"  xml:space="preserve">65.0</text>
<text x="506" y="521" font-size="17.5" fill="#fff" font-family='"Liberation Sans", sans-serif' textLength="33.5" lengthAdjust="spacingAndGlyphs" stroke="#fff" stroke-width="0.3"  xml:space="preserve">45.0</text>
<text x="506" y="549" font-size="17.5" fill="#fff" font-family='"Liberation Sans", sans-serif' textLength="33.5" lengthAdjust="spacingAndGlyphs" stroke="#fff" stroke-width="0.3"  xml:space="preserve">25.0</text>
<text x="506" y="577" font-size="17.5" fill="#fff" font-family='"Liberation Sans", sans-serif' textLength="24" lengthAdjust="spacingAndGlyphs" stroke="#fff" stroke-width="0.3"  xml:space="preserve">5.0</text>
<text x="506" y="605" font-size="17.5" fill="#fff" font-family='"Liberation Sans", sans-serif' textLength="44" lengthAdjust="spacingAndGlyphs" stroke="#fff" stroke-width="0.3"  xml:space="preserve">-15.0</text>
<rect x="488" y="626" width="86" height="1" fill="#9a9a9a" />
<text x="490" y="637.5" font-size="17.5" fill="#fff" font-family='"Liberation Sans", sans-serif' textLength="52" lengthAdjust="spacingAndGlyphs" stroke="#fff" stroke-width="0.3"  xml:space="preserve">maxdz</text>
<rect x="490" y="653" width="10" height="7" fill="#fa8080" />
<rect x="490" y="660" width="10" height="7" fill="#fc9496" />
<rect x="490" y="667" width="10" height="7" fill="#ffb060" />
<rect x="490" y="674" width="10" height="7" fill="#fdd8b0" />
<rect x="490" y="681" width="10" height="7" fill="#fcdc14" />
<rect x="490" y="688" width="10" height="7" fill="#eeb422" />
<rect x="490" y="695" width="10" height="7" fill="#da9030" />
<rect x="490" y="702" width="10" height="7" fill="#c8c8c8" />
<rect x="490" y="709" width="10" height="7" fill="#006a48" />
<rect x="490" y="716" width="10" height="7" fill="#00e696" />
<rect x="490" y="723" width="10" height="7" fill="#00aadc" />
<rect x="490" y="730" width="10" height="7" fill="#0064dc" />
<rect x="490" y="737" width="10" height="7" fill="#1e3ce6" />
<rect x="490" y="744" width="10" height="7" fill="#4620e6" />
<rect x="490" y="751" width="10" height="7" fill="#7814f0" />
<rect x="490" y="758" width="10" height="7" fill="#9610ff" />
<text x="506" y="661" font-size="17.5" fill="#fff" font-family='"Liberation Sans", sans-serif' textLength="33.5" lengthAdjust="spacingAndGlyphs" stroke="#fff" stroke-width="0.3"  xml:space="preserve">65.0</text>
<text x="506" y="689" font-size="17.5" fill="#fff" font-family='"Liberation Sans", sans-serif' textLength="33.5" lengthAdjust="spacingAndGlyphs" stroke="#fff" stroke-width="0.3"  xml:space="preserve">45.0</text>
<text x="506" y="717" font-size="17.5" fill="#fff" font-family='"Liberation Sans", sans-serif' textLength="33.5" lengthAdjust="spacingAndGlyphs" stroke="#fff" stroke-width="0.3"  xml:space="preserve">25.0</text>
<text x="506" y="745" font-size="17.5" fill="#fff" font-family='"Liberation Sans", sans-serif' textLength="24" lengthAdjust="spacingAndGlyphs" stroke="#fff" stroke-width="0.3"  xml:space="preserve">5.0</text>
<text x="506" y="773" font-size="17.5" fill="#fff" font-family='"Liberation Sans", sans-serif' textLength="44" lengthAdjust="spacingAndGlyphs" stroke="#fff" stroke-width="0.3"  xml:space="preserve">-15.0</text>
<rect x="488" y="795" width="86" height="1" fill="#9a9a9a" />
<text x="490" y="807.5" font-size="10" fill="#ff0000" font-family='"Liberation Sans", sans-serif' textLength="38" lengthAdjust="spacingAndGlyphs" stroke="#ff0000" stroke-width="0.2"  xml:space="preserve">rhb_met</text>
<rect x="488" y="819" width="86" height="1" fill="#9a9a9a" />
<text x="382" y="860.5" font-size="25" fill="#fff" font-family='"Liberation Sans", sans-serif' textLength="180" lengthAdjust="spacingAndGlyphs" stroke="#fff" stroke-width="0.3"  xml:space="preserve">Alt: 0.50 km MSL</text>
<rect x="10" y="821" width="46" height="48" fill="#a0a0a4" />
<rect x="11" y="822" width="44" height="46" fill="#191970" />
<text transform="translate(14.5,862.5) scale(1.18,1)" font-size="47" font-weight="200" fill="#ffff00" font-family='"DejaVu Sans", "Liberation Sans", sans-serif'>Z</text>
<rect x="57" y="821" width="46" height="48" fill="#a8a8a8" />
<rect x="58" y="822" width="44" height="46" fill="#696969" />
<text x="60" y="836" font-size="14.5" fill="#dcdcdc" font-family='"Liberation Sans", sans-serif' textLength="30" lengthAdjust="spacingAndGlyphs" font-weight="bold" stroke="#dcdcdc" stroke-width="0.3"  xml:space="preserve">GOES</text>
<path d="M60 838 L65 838 A 22 26 0 0 1 81 865 L60 865Z" fill="url(#ditG)"/>
<g fill="#dcdcdc"><path d="M60 858 L68 857 L69 865 L60 865Z"/><path d="M71 846 L75 843 L78 848 L81 856 L77 853 L73 852Z"/><path d="M60 838 L65 838 L62 842 L60 841Z"/><path d="M70 841 L73 841 L72 845Z"/></g>
<path d="M94 843 L97 840 L100 843 L97 846Z" fill="#dcdcdc"/>
<path d="M81 845 L94 843" stroke="#dcdcdc" stroke-width="1" stroke-dasharray="1 1.4" fill="none" shape-rendering="auto"/>
<path d="M82 854 Q89 848 95 845" stroke="#dcdcdc" stroke-width="1" stroke-dasharray="1 1.4" fill="none" shape-rendering="auto"/>
<rect x="76" y="838" width="1" height="1" fill="#dcdcdc" />
<rect x="81" y="841" width="1" height="1" fill="#dcdcdc" />
<rect x="88" y="841" width="1" height="1" fill="#dcdcdc" />
<rect x="91" y="854" width="1" height="1" fill="#dcdcdc" />
<rect x="96" y="852" width="1" height="1" fill="#dcdcdc" />
<rect x="82" y="863" width="1" height="1" fill="#dcdcdc" />
<text x="84" y="864" font-size="10.5" fill="#dcdcdc" font-family='"Liberation Sans", sans-serif' textLength="12" lengthAdjust="spacingAndGlyphs" stroke="#dcdcdc" stroke-width="0.2"  xml:space="preserve">IR</text>
<rect x="104" y="821" width="46" height="48" fill="#a0a0a4" />
<rect x="105" y="822" width="44" height="46" fill="#191970" />
<g shape-rendering="auto"><path d="M110 830 Q113 847 131 852" stroke="#ffff00" stroke-width="2" fill="none"/><path d="M115.5 845 L118.5 845 L120 861 L113 861Z" fill="#ffff00"/><path d="M116 843.5 L120 843.5 L120 848" stroke="#ffff00" stroke-width="1" fill="none"/></g>
<text x="136.5" y="838.5" font-size="13.5" fill="#ffff00" font-family='"Liberation Sans", sans-serif' textLength="6.5" lengthAdjust="spacingAndGlyphs" stroke="#ffff00" stroke-width="0.1"  xml:space="preserve">S</text>
<text x="136.5" y="850.8" font-size="13.5" fill="#ffff00" font-family='"Liberation Sans", sans-serif' textLength="6.5" lengthAdjust="spacingAndGlyphs" stroke="#ffff00" stroke-width="0.1"  xml:space="preserve">U</text>
<text x="136.5" y="863.1" font-size="13.5" fill="#ffff00" font-family='"Liberation Sans", sans-serif' textLength="6.5" lengthAdjust="spacingAndGlyphs" stroke="#ffff00" stroke-width="0.1"  xml:space="preserve">R</text>
<rect x="151" y="821" width="46" height="48" fill="#a0a0a4" />
<rect x="152" y="822" width="44" height="46" fill="#191970" />
<rect x="156" y="826" width="1" height="38" fill="#ffff00" />
<rect x="165" y="826" width="1" height="38" fill="#ffff00" />
<rect x="174" y="826" width="1" height="38" fill="#ffff00" />
<rect x="183" y="826" width="1" height="38" fill="#ffff00" />
<rect x="192" y="826" width="1" height="38" fill="#ffff00" />
<rect x="156" y="826" width="37" height="1" fill="#ffff00" />
<rect x="156" y="835" width="37" height="1" fill="#ffff00" />
<rect x="156" y="844" width="37" height="1" fill="#ffff00" />
<rect x="156" y="854" width="37" height="1" fill="#ffff00" />
<rect x="156" y="863" width="37" height="1" fill="#ffff00" />
<g shape-rendering="auto"><path d="M163 827 Q167 846 185 852" stroke="#ffff00" stroke-width="1.6" fill="none"/><path d="M170.5 843 L173 843 L175 860 L167 860Z" fill="#ffff00"/></g>
<rect x="198" y="821" width="14" height="48" fill="#a0a0a4" />
<rect x="199" y="822" width="12" height="46" fill="#191970" />
<text x="205" y="832.5" font-size="6.5" fill="#ffff00" font-family='"Liberation Sans", sans-serif' text-anchor="middle" stroke="#ffff00" stroke-width="0.25"  xml:space="preserve">B</text>
<text x="205" y="838.5" font-size="6.5" fill="#ffff00" font-family='"Liberation Sans", sans-serif' text-anchor="middle" stroke="#ffff00" stroke-width="0.25"  xml:space="preserve">O</text>
<text x="205" y="844.5" font-size="6.5" fill="#ffff00" font-family='"Liberation Sans", sans-serif' text-anchor="middle" stroke="#ffff00" stroke-width="0.25"  xml:space="preserve">U</text>
<text x="205" y="850.5" font-size="6.5" fill="#ffff00" font-family='"Liberation Sans", sans-serif' text-anchor="middle" stroke="#ffff00" stroke-width="0.25"  xml:space="preserve">N</text>
<text x="205" y="856.5" font-size="6.5" fill="#ffff00" font-family='"Liberation Sans", sans-serif' text-anchor="middle" stroke="#ffff00" stroke-width="0.25"  xml:space="preserve">D</text>
<text x="205" y="862.5" font-size="6.5" fill="#ffff00" font-family='"Liberation Sans", sans-serif' text-anchor="middle" stroke="#ffff00" stroke-width="0.25"  xml:space="preserve">S</text>
<rect x="213" y="845" width="22" height="24" fill="#a0a0a4" />
<rect x="214" y="846" width="20" height="22" fill="#191970" />
<rect x="216" y="849" width="1" height="16" fill="#ffff00" />
<rect x="221" y="849" width="1" height="16" fill="#ffff00" />
<rect x="227" y="849" width="1" height="16" fill="#ffff00" />
<rect x="232" y="849" width="1" height="16" fill="#ffff00" />
<rect x="216" y="849" width="17" height="1" fill="#ffff00" />
<rect x="216" y="854" width="17" height="1" fill="#ffff00" />
<rect x="216" y="859" width="17" height="1" fill="#ffff00" />
<rect x="216" y="864" width="17" height="1" fill="#ffff00" />
<rect x="236" y="821" width="21" height="48" fill="#a0a0a4" />
<rect x="237" y="822" width="19" height="46" fill="#191970" />
<g fill="#ffff00" shape-rendering="auto"><path d="M239 825 L243 826 L241 830 L240 833 L239 830Z"/><path d="M240 834 L242 833 L242 836Z"/><path d="M246 826 L250 826 L253 825 L251 828 L249 829 L251 832 L252 834 L250 836 L249 832 L247 829Z"/><path d="M252 826 L254 825 L253 827Z"/></g>
<text x="246.5" y="846" font-size="8.5" fill="#ffff00" font-family='"Liberation Sans", sans-serif' text-anchor="middle" stroke="#ffff00" stroke-width="0.1"  xml:space="preserve">M</text>
<text x="246.5" y="854" font-size="8.5" fill="#ffff00" font-family='"Liberation Sans", sans-serif' text-anchor="middle" stroke="#ffff00" stroke-width="0.1"  xml:space="preserve">A</text>
<text x="246.5" y="862" font-size="8.5" fill="#ffff00" font-family='"Liberation Sans", sans-serif' text-anchor="middle" stroke="#ffff00" stroke-width="0.1"  xml:space="preserve">P</text>
<rect x="258" y="821" width="21" height="48" fill="#a0a0a4" />
<rect x="259" y="822" width="19" height="46" fill="#191970" />
<g shape-rendering="auto" stroke="#ffff00" fill="none" stroke-width="1.2"><ellipse cx="268.5" cy="844.5" rx="7" ry="8"/><circle cx="268.5" cy="844.5" r="3"/><ellipse cx="268.5" cy="844.5" rx="5.2" ry="5.8"/><line x1="271.5" y1="844.5" x2="275.5" y2="844.5"/><line x1="270.6" y1="846.6" x2="273.4" y2="850.2"/><line x1="268.5" y1="847.5" x2="268.5" y2="852.5"/><line x1="266.4" y1="846.6" x2="263.6" y2="850.2"/><line x1="265.5" y1="844.5" x2="261.5" y2="844.5"/><line x1="266.4" y1="842.4" x2="263.6" y2="838.8"/><line x1="268.5" y1="841.5" x2="268.5" y2="836.5"/><line x1="270.6" y1="842.4" x2="273.4" y2="838.8"/><line x1="263.5" y1="836.0" x2="273.5" y2="836.0"/><line x1="263.5" y1="853.0" x2="273.5" y2="853.0"/></g>
<rect x="280" y="845" width="22" height="24" fill="#a0a0a4" />
<rect x="281" y="846" width="20" height="22" fill="#191970" />
<circle cx="291.5" cy="857.5" r="6.5" fill="none" stroke="#ffff00" stroke-width="1.2" shape-rendering="auto"/>
<rect x="303" y="821" width="46" height="48" fill="#a0a0a4" />
<rect x="304" y="822" width="44" height="46" fill="#191970" />
<g shape-rendering="auto" stroke="#ffff00" fill="none" stroke-width="1.1"><path d="M309 853.5 L343 853.5 L340 860 L312 860 Q309 858 309 853.5"/><path d="M311.5 853 L311.5 845.5 L315.5 845.5 L318 853"/><circle cx="325.5" cy="844.5" r="3.3"/><path d="M324.5 848 V853 M326.5 848 V853"/><path d="M337.5 837 V853"/></g>
<path d="M306 865 L306 860 L307 859.2 L309.5 861.5 L312 859.2 L314.5 861.5 L317 859.2 L319.5 861.5 L322 859.2 L324.5 861.5 L327 859.2 L329.5 861.5 L332 859.2 L334.5 861.5 L337 859.2 L339.5 861.5 L342 859.2 L344.5 861.5 L346 859.2 L346 865Z" fill="#ffff00" shape-rendering="auto"/>
<rect x="0" y="427" width="2" height="445" fill="#0000cd" />
<line x1="2.5" x2="2.5" y1="427" y2="872" stroke="#fff" stroke-width="1" stroke-dasharray="1 1"/>
<rect x="3" y="427" width="1" height="445" fill="#fff8dc" />
<line x1="4.5" x2="4.5" y1="428" y2="872" stroke="#fff" stroke-width="1" stroke-dasharray="1 1"/>
<line x1="1" x2="574" y1="426.5" y2="426.5" stroke="#fff" stroke-width="1" stroke-dasharray="1 1"/>
<line x1="573.5" x2="573.5" y1="427" y2="872" stroke="#fff" stroke-width="1" stroke-dasharray="1 1"/>
<line x1="5" x2="574" y1="871.5" y2="871.5" stroke="#fff" stroke-width="1" stroke-dasharray="1 1"/>
<rect x="573" y="2" width="560" height="385" fill="#000" />
<rect x="622" y="29" width="1" height="283" fill="#fff" />
<rect x="1048" y="29" width="1" height="283" fill="#fff" />
<rect x="622" y="29" width="427" height="1" fill="#fff" />
<rect x="622" y="311" width="427" height="1" fill="#fff" />
<rect x="675" y="29" width="1" height="8" fill="#fff" />
<rect x="675" y="304" width="1" height="7" fill="#fff" />
<rect x="728" y="29" width="1" height="8" fill="#fff" />
<rect x="728" y="304" width="1" height="7" fill="#fff" />
<rect x="782" y="29" width="1" height="8" fill="#fff" />
<rect x="782" y="304" width="1" height="7" fill="#fff" />
<rect x="835" y="29" width="1" height="8" fill="#fff" />
<rect x="835" y="304" width="1" height="7" fill="#fff" />
<rect x="888" y="29" width="1" height="8" fill="#fff" />
<rect x="888" y="304" width="1" height="7" fill="#fff" />
<rect x="942" y="29" width="1" height="8" fill="#fff" />
<rect x="942" y="304" width="1" height="7" fill="#fff" />
<rect x="995" y="29" width="1" height="8" fill="#fff" />
<rect x="995" y="304" width="1" height="7" fill="#fff" />
<rect x="622" y="57" width="12" height="1" fill="#fff" />
<rect x="1037" y="57" width="11" height="1" fill="#fff" />
<rect x="622" y="85" width="12" height="1" fill="#fff" />
<rect x="1037" y="85" width="11" height="1" fill="#fff" />
<rect x="622" y="114" width="12" height="1" fill="#fff" />
<rect x="1037" y="114" width="11" height="1" fill="#fff" />
<rect x="622" y="142" width="12" height="1" fill="#fff" />
<rect x="1037" y="142" width="11" height="1" fill="#fff" />
<rect x="622" y="170" width="12" height="1" fill="#fff" />
<rect x="1037" y="170" width="11" height="1" fill="#fff" />
<rect x="622" y="198" width="12" height="1" fill="#fff" />
<rect x="1037" y="198" width="11" height="1" fill="#fff" />
<rect x="622" y="226" width="12" height="1" fill="#fff" />
<rect x="1037" y="226" width="11" height="1" fill="#fff" />
<rect x="622" y="255" width="12" height="1" fill="#fff" />
<rect x="1037" y="255" width="11" height="1" fill="#fff" />
<rect x="622" y="283" width="12" height="1" fill="#fff" />
<rect x="1037" y="283" width="11" height="1" fill="#fff" />
<text x="619" y="28.0" font-size="9.5" fill="#fff" font-family='"Liberation Sans", sans-serif' text-anchor="end" stroke="#fff" stroke-width="0.15"  xml:space="preserve">20</text>
<text x="619" y="84.4" font-size="9.5" fill="#fff" font-family='"Liberation Sans", sans-serif' text-anchor="end" stroke="#fff" stroke-width="0.15"  xml:space="preserve">16</text>
<text x="619" y="140.8" font-size="9.5" fill="#fff" font-family='"Liberation Sans", sans-serif' text-anchor="end" stroke="#fff" stroke-width="0.15"  xml:space="preserve">12</text>
<text x="619" y="197.2" font-size="9.5" fill="#fff" font-family='"Liberation Sans", sans-serif' text-anchor="end" stroke="#fff" stroke-width="0.15"  xml:space="preserve">8</text>
<text x="619" y="253.6" font-size="9.5" fill="#fff" font-family='"Liberation Sans", sans-serif' text-anchor="end" stroke="#fff" stroke-width="0.15"  xml:space="preserve">4</text>
<text x="619" y="310.0" font-size="9.5" fill="#fff" font-family='"Liberation Sans", sans-serif' text-anchor="end" stroke="#fff" stroke-width="0.15"  xml:space="preserve">0</text>
<text x="622.0" y="322" font-size="9.5" fill="#fff" font-family='"Liberation Sans", sans-serif' text-anchor="middle" stroke="#fff" stroke-width="0.15"  xml:space="preserve">0.0</text>
<text x="728.5" y="322" font-size="9.5" fill="#fff" font-family='"Liberation Sans", sans-serif' text-anchor="middle" stroke="#fff" stroke-width="0.15"  xml:space="preserve">6.3</text>
<text x="835.0" y="322" font-size="9.5" fill="#fff" font-family='"Liberation Sans", sans-serif' text-anchor="middle" stroke="#fff" stroke-width="0.15"  xml:space="preserve">12.6</text>
<text x="941.5" y="322" font-size="9.5" fill="#fff" font-family='"Liberation Sans", sans-serif' text-anchor="middle" stroke="#fff" stroke-width="0.15"  xml:space="preserve">18.9</text>
<text x="1048" y="322" font-size="9.5" fill="#fff" font-family='"Liberation Sans", sans-serif' text-anchor="end" stroke="#fff" stroke-width="0.15"  xml:space="preserve">25</text>
<text x="802" y="330.5" font-size="9.5" fill="#fff" font-family='"Liberation Sans", sans-serif' textLength="68" lengthAdjust="spacingAndGlyphs" stroke="#fff" stroke-width="0.15"  xml:space="preserve">Distance in km</text>
<text transform="translate(604,217.5) rotate(-90)" font-size="13" fill="#fff" font-family='"Liberation Mono", monospace' textLength="95" lengthAdjust="spacingAndGlyphs" stroke="#fff" stroke-width="0.3">km above MSL</text>
<g shape-rendering="auto">
<path d="M644.0 293.9 L689.0 293.9 L691.1 288.6 L691.1 276.1 L914.8 276.1 L914.8 299.1 L644.0 299.1Z" fill="#00aadc"/>
<rect x="644" y="294" width="8" height="5" fill="#0064dc" />
<path d="M670.8 293.9 L688.2 293.9 L690.8 289.9 L691.6 281.4 L698.1 278.8 L708.5 276.7 L758.0 276.1 L781.5 277.7 L802.3 281.4 L815.3 281.4 L828.3 278.2 L838.8 278.8 L849.2 284.7 L854.4 291.2 L854.4 299.1 L670.8 299.1Z" fill="#00e696"/>
<path d="M702.8 299.1 L705.9 293.3 L716.4 290.7 L732.0 288.1 L739.8 289.9 L746.3 295.2 L749.7 299.1Z" fill="#006a48"/>
</g>
<text x="582.5" y="20.5" font-size="18.5" fill="#ffff00" font-family='"Liberation Sans", sans-serif' textLength="175.5" lengthAdjust="spacingAndGlyphs" stroke="#ffff00" stroke-width="0.6"  xml:space="preserve">2-aug-1997,03:05:00</text>
<text x="769" y="20.5" font-size="18.5" fill="#fff" font-family='"Liberation Sans", sans-serif' textLength="313" lengthAdjust="spacingAndGlyphs" stroke="#fff" stroke-width="0.3"  xml:space="preserve">Planar cross-section plot.  Contour of</text>
<text x="582.5" y="47.2" font-size="18.5" fill="#fff" font-family='"Liberation Sans", sans-serif' textLength="172" lengthAdjust="spacingAndGlyphs" stroke="#fff" stroke-width="0.3"  xml:space="preserve">maxdz using: rhb_3d.</text>
<rect x="1048" y="28" width="84" height="1" fill="#9a9a9a" />
<text x="1050.7" y="43.8" font-size="12.5" fill="#fff" font-family='"Liberation Sans", sans-serif' textLength="33.6" lengthAdjust="spacingAndGlyphs" stroke="#fff" stroke-width="0.1"  xml:space="preserve">maxdz</text>
<rect x="1050" y="52" width="10" height="17" fill="#fa8080" />
<rect x="1050" y="69" width="10" height="17" fill="#fc9496" />
<rect x="1050" y="86" width="10" height="17" fill="#ffb060" />
<rect x="1050" y="103" width="10" height="17" fill="#fdd8b0" />
<rect x="1050" y="120" width="10" height="17" fill="#fcdc14" />
<rect x="1050" y="137" width="10" height="17" fill="#eeb422" />
<rect x="1050" y="154" width="10" height="17" fill="#da9030" />
<rect x="1050" y="171" width="10" height="17" fill="#c8c8c8" />
<rect x="1050" y="188" width="10" height="17" fill="#006a48" />
<rect x="1050" y="205" width="10" height="17" fill="#00e696" />
<rect x="1050" y="222" width="10" height="17" fill="#00aadc" />
<rect x="1050" y="239" width="10" height="17" fill="#0064dc" />
<rect x="1050" y="256" width="10" height="17" fill="#1e3ce6" />
<rect x="1050" y="273" width="10" height="17" fill="#4620e6" />
<rect x="1050" y="290" width="10" height="17" fill="#7814f0" />
<rect x="1050" y="307" width="10" height="17" fill="#9610ff" />
<text x="1065.8" y="64.5" font-size="12" fill="#fff" font-family='"Liberation Sans", sans-serif' textLength="22.5" lengthAdjust="spacingAndGlyphs" stroke="#fff" stroke-width="0.1"  xml:space="preserve">62.5</text>
<text x="1065.8" y="81.5" font-size="12" fill="#fff" font-family='"Liberation Sans", sans-serif' textLength="22.5" lengthAdjust="spacingAndGlyphs" stroke="#fff" stroke-width="0.1"  xml:space="preserve">57.5</text>
<text x="1065.8" y="98.5" font-size="12" fill="#fff" font-family='"Liberation Sans", sans-serif' textLength="22.5" lengthAdjust="spacingAndGlyphs" stroke="#fff" stroke-width="0.1"  xml:space="preserve">52.5</text>
<text x="1065.8" y="115.5" font-size="12" fill="#fff" font-family='"Liberation Sans", sans-serif' textLength="22.5" lengthAdjust="spacingAndGlyphs" stroke="#fff" stroke-width="0.1"  xml:space="preserve">47.5</text>
<text x="1065.8" y="132.5" font-size="12" fill="#fff" font-family='"Liberation Sans", sans-serif' textLength="22.5" lengthAdjust="spacingAndGlyphs" stroke="#fff" stroke-width="0.1"  xml:space="preserve">42.5</text>
<text x="1065.8" y="149.5" font-size="12" fill="#fff" font-family='"Liberation Sans", sans-serif' textLength="22.5" lengthAdjust="spacingAndGlyphs" stroke="#fff" stroke-width="0.1"  xml:space="preserve">37.5</text>
<text x="1065.8" y="166.5" font-size="12" fill="#fff" font-family='"Liberation Sans", sans-serif' textLength="22.5" lengthAdjust="spacingAndGlyphs" stroke="#fff" stroke-width="0.1"  xml:space="preserve">32.5</text>
<text x="1065.8" y="183.5" font-size="12" fill="#fff" font-family='"Liberation Sans", sans-serif' textLength="22.5" lengthAdjust="spacingAndGlyphs" stroke="#fff" stroke-width="0.1"  xml:space="preserve">27.5</text>
<text x="1065.8" y="200.5" font-size="12" fill="#fff" font-family='"Liberation Sans", sans-serif' textLength="22.5" lengthAdjust="spacingAndGlyphs" stroke="#fff" stroke-width="0.1"  xml:space="preserve">22.5</text>
<text x="1065.8" y="217.5" font-size="12" fill="#fff" font-family='"Liberation Sans", sans-serif' textLength="22.5" lengthAdjust="spacingAndGlyphs" stroke="#fff" stroke-width="0.1"  xml:space="preserve">17.5</text>
<text x="1065.8" y="234.5" font-size="12" fill="#fff" font-family='"Liberation Sans", sans-serif' textLength="22.5" lengthAdjust="spacingAndGlyphs" stroke="#fff" stroke-width="0.1"  xml:space="preserve">12.5</text>
<text x="1065.8" y="251.5" font-size="12" fill="#fff" font-family='"Liberation Sans", sans-serif' textLength="16" lengthAdjust="spacingAndGlyphs" stroke="#fff" stroke-width="0.1"  xml:space="preserve">7.5</text>
<text x="1065.8" y="268.5" font-size="12" fill="#fff" font-family='"Liberation Sans", sans-serif' textLength="16" lengthAdjust="spacingAndGlyphs" stroke="#fff" stroke-width="0.1"  xml:space="preserve">2.5</text>
<text x="1065.8" y="285.5" font-size="12" fill="#fff" font-family='"Liberation Sans", sans-serif' textLength="24" lengthAdjust="spacingAndGlyphs" stroke="#fff" stroke-width="0.1"  xml:space="preserve">-2.5</text>
<text x="1065.8" y="302.5" font-size="12" fill="#fff" font-family='"Liberation Sans", sans-serif' textLength="24" lengthAdjust="spacingAndGlyphs" stroke="#fff" stroke-width="0.1"  xml:space="preserve">-7.5</text>
<text x="1065.8" y="319.5" font-size="12" fill="#fff" font-family='"Liberation Sans", sans-serif' textLength="30.5" lengthAdjust="spacingAndGlyphs" stroke="#fff" stroke-width="0.1"  xml:space="preserve">-12.5</text>
<rect x="1048" y="335" width="84" height="1" fill="#9a9a9a" />
<rect x="577" y="336" width="46" height="48" fill="#a0a0a4" />
<rect x="578" y="337" width="44" height="46" fill="#191970" />
<text transform="translate(581.5,377.5) scale(1.18,1)" font-size="47" font-weight="200" fill="#ffff00" font-family='"DejaVu Sans", "Liberation Sans", sans-serif'>Z</text>
<rect x="624" y="336" width="46" height="48" fill="#a0a0a4" />
<rect x="625" y="337" width="44" height="46" fill="#191970" />
<text x="647" y="345.3" font-size="7.6" fill="#ffff00" font-family='"Liberation Sans", sans-serif' textLength="24" lengthAdjust="spacingAndGlyphs" text-anchor="middle" font-weight="bold" stroke="#ffff00" stroke-width="0.15"  xml:space="preserve">CROSS</text>
<text x="647" y="380.3" font-size="7.6" fill="#ffff00" font-family='"Liberation Sans", sans-serif' textLength="30" lengthAdjust="spacingAndGlyphs" text-anchor="middle" font-weight="bold" stroke="#ffff00" stroke-width="0.15"  xml:space="preserve">SECTION</text>
<g fill="none" stroke="#ffff00" stroke-width="1"><rect x="642.5" y="346.5" width="22" height="19"/><g shape-rendering="auto"><path d="M628.5 354.5 L642.5 346.5 M650.5 354.5 L664.5 346.5 M650.5 373.5 L664.5 365.5"/><path d="M628.5 373.5 L642.5 365.5" stroke-dasharray="1 1.5"/></g></g>
<path d="M637 350 L658 348 L658 369 L637 372Z" fill="#191970"/><path d="M637 350 L658 348 L658 369 L637 372Z" fill="url(#ditY)"/>
<path d="M637 350 L658 348 L658 369 L637 372Z" fill="none" stroke="#ffff00" stroke-width="1" shape-rendering="auto"/>
<rect x="628.5" y="354.5" width="22" height="19" fill="none" stroke="#ffff00" stroke-width="1"/>
<rect x="671" y="336" width="46" height="48" fill="#a8a8a8" />
<rect x="672" y="337" width="44" height="46" fill="#696969" />
<text x="694" y="345.3" font-size="7.6" fill="#dcdcdc" font-family='"Liberation Sans", sans-serif' textLength="24" lengthAdjust="spacingAndGlyphs" text-anchor="middle" font-weight="bold" stroke="#dcdcdc" stroke-width="0.15"  xml:space="preserve">CROSS</text>
<text x="694" y="380.3" font-size="7.6" fill="#dcdcdc" font-family='"Liberation Sans", sans-serif' textLength="30" lengthAdjust="spacingAndGlyphs" text-anchor="middle" font-weight="bold" stroke="#dcdcdc" stroke-width="0.15"  xml:space="preserve">SECTION</text>
<g fill="none" stroke="#dcdcdc" stroke-width="1"><rect x="689.5" y="346.5" width="22" height="19"/><g shape-rendering="auto"><path d="M675.5 354.5 L689.5 346.5 M697.5 354.5 L711.5 346.5 M697.5 373.5 L711.5 365.5"/><path d="M675.5 373.5 L689.5 365.5" stroke-dasharray="1 1.5"/></g></g>
<path d="M684 350 L705 348 L705 369 L684 372Z" fill="#696969"/><path d="M684 350 L705 348 L705 369 L684 372Z" fill="url(#ditG)"/>
<path d="M684 350 L705 348 L705 369 L684 372Z" fill="none" stroke="#dcdcdc" stroke-width="1" shape-rendering="auto"/>
<rect x="675.5" y="354.5" width="22" height="19" fill="none" stroke="#dcdcdc" stroke-width="1"/>
<rect x="718" y="336" width="46" height="48" fill="#a8a8a8" />
<rect x="719" y="337" width="44" height="46" fill="#696969" />
<text x="741" y="345.3" font-size="7.6" fill="#dcdcdc" font-family='"Liberation Sans", sans-serif' textLength="24" lengthAdjust="spacingAndGlyphs" text-anchor="middle" font-weight="bold" stroke="#dcdcdc" stroke-width="0.15"  xml:space="preserve">CROSS</text>
<text x="741" y="380.3" font-size="7.6" fill="#dcdcdc" font-family='"Liberation Sans", sans-serif' textLength="30" lengthAdjust="spacingAndGlyphs" text-anchor="middle" font-weight="bold" stroke="#dcdcdc" stroke-width="0.15"  xml:space="preserve">SECTION</text>
<g fill="none" stroke="#dcdcdc" stroke-width="1"><rect x="736.5" y="346.5" width="22" height="19"/><g shape-rendering="auto"><path d="M722.5 354.5 L736.5 346.5 M744.5 354.5 L758.5 346.5 M744.5 373.5 L758.5 365.5"/><path d="M722.5 373.5 L736.5 365.5" stroke-dasharray="1 1.5"/></g></g>
<path d="M731 350 L752 348 L752 369 L731 372Z" fill="#696969"/><path d="M731 350 L752 348 L752 369 L731 372Z" fill="url(#ditG)"/>
<path d="M731 350 L752 348 L752 369 L731 372Z" fill="none" stroke="#dcdcdc" stroke-width="1" shape-rendering="auto"/>
<rect x="722.5" y="354.5" width="22" height="19" fill="none" stroke="#dcdcdc" stroke-width="1"/>
<line x1="573" x2="1133" y1="2.5" y2="2.5" stroke="#fff" stroke-width="1" stroke-dasharray="1 1"/>
<line x1="1132.5" x2="1132.5" y1="3" y2="387" stroke="#fff" stroke-width="1" stroke-dasharray="1 1"/>
<line x1="572.5" x2="572.5" y1="3" y2="387" stroke="#fff" stroke-width="1" stroke-dasharray="1 1"/>
<rect x="573" y="386" width="3" height="385" fill="#000" />
<rect x="575" y="386" width="560" height="385" fill="#000" />
<rect x="624" y="413" width="1" height="283" fill="#fff" />
<rect x="1050" y="413" width="1" height="283" fill="#fff" />
<rect x="624" y="413" width="427" height="1" fill="#fff" />
<rect x="624" y="695" width="427" height="1" fill="#fff" />
<rect x="677" y="413" width="1" height="8" fill="#fff" />
<rect x="677" y="688" width="1" height="7" fill="#fff" />
<rect x="730" y="413" width="1" height="8" fill="#fff" />
<rect x="730" y="688" width="1" height="7" fill="#fff" />
<rect x="784" y="413" width="1" height="8" fill="#fff" />
<rect x="784" y="688" width="1" height="7" fill="#fff" />
<rect x="837" y="413" width="1" height="8" fill="#fff" />
<rect x="837" y="688" width="1" height="7" fill="#fff" />
<rect x="890" y="413" width="1" height="8" fill="#fff" />
<rect x="890" y="688" width="1" height="7" fill="#fff" />
<rect x="944" y="413" width="1" height="8" fill="#fff" />
<rect x="944" y="688" width="1" height="7" fill="#fff" />
<rect x="997" y="413" width="1" height="8" fill="#fff" />
<rect x="997" y="688" width="1" height="7" fill="#fff" />
<rect x="624" y="441" width="12" height="1" fill="#fff" />
<rect x="1039" y="441" width="11" height="1" fill="#fff" />
<rect x="624" y="469" width="12" height="1" fill="#fff" />
<rect x="1039" y="469" width="11" height="1" fill="#fff" />
<rect x="624" y="498" width="12" height="1" fill="#fff" />
<rect x="1039" y="498" width="11" height="1" fill="#fff" />
<rect x="624" y="526" width="12" height="1" fill="#fff" />
<rect x="1039" y="526" width="11" height="1" fill="#fff" />
<rect x="624" y="554" width="12" height="1" fill="#fff" />
<rect x="1039" y="554" width="11" height="1" fill="#fff" />
<rect x="624" y="582" width="12" height="1" fill="#fff" />
<rect x="1039" y="582" width="11" height="1" fill="#fff" />
<rect x="624" y="610" width="12" height="1" fill="#fff" />
<rect x="1039" y="610" width="11" height="1" fill="#fff" />
<rect x="624" y="639" width="12" height="1" fill="#fff" />
<rect x="1039" y="639" width="11" height="1" fill="#fff" />
<rect x="624" y="667" width="12" height="1" fill="#fff" />
<rect x="1039" y="667" width="11" height="1" fill="#fff" />
<text x="621" y="412.0" font-size="9.5" fill="#fff" font-family='"Liberation Sans", sans-serif' text-anchor="end" stroke="#fff" stroke-width="0.15"  xml:space="preserve">20</text>
<text x="621" y="468.4" font-size="9.5" fill="#fff" font-family='"Liberation Sans", sans-serif' text-anchor="end" stroke="#fff" stroke-width="0.15"  xml:space="preserve">16</text>
<text x="621" y="524.8" font-size="9.5" fill="#fff" font-family='"Liberation Sans", sans-serif' text-anchor="end" stroke="#fff" stroke-width="0.15"  xml:space="preserve">12</text>
<text x="621" y="581.2" font-size="9.5" fill="#fff" font-family='"Liberation Sans", sans-serif' text-anchor="end" stroke="#fff" stroke-width="0.15"  xml:space="preserve">8</text>
<text x="621" y="637.6" font-size="9.5" fill="#fff" font-family='"Liberation Sans", sans-serif' text-anchor="end" stroke="#fff" stroke-width="0.15"  xml:space="preserve">4</text>
<text x="621" y="694.0" font-size="9.5" fill="#fff" font-family='"Liberation Sans", sans-serif' text-anchor="end" stroke="#fff" stroke-width="0.15"  xml:space="preserve">0</text>
<text x="624.0" y="706" font-size="9.5" fill="#fff" font-family='"Liberation Sans", sans-serif' text-anchor="middle" stroke="#fff" stroke-width="0.15"  xml:space="preserve">0.0</text>
<text x="730.5" y="706" font-size="9.5" fill="#fff" font-family='"Liberation Sans", sans-serif' text-anchor="middle" stroke="#fff" stroke-width="0.15"  xml:space="preserve">6.3</text>
<text x="837.0" y="706" font-size="9.5" fill="#fff" font-family='"Liberation Sans", sans-serif' text-anchor="middle" stroke="#fff" stroke-width="0.15"  xml:space="preserve">12.6</text>
<text x="943.5" y="706" font-size="9.5" fill="#fff" font-family='"Liberation Sans", sans-serif' text-anchor="middle" stroke="#fff" stroke-width="0.15"  xml:space="preserve">18.9</text>
<text x="1050" y="706" font-size="9.5" fill="#fff" font-family='"Liberation Sans", sans-serif' text-anchor="end" stroke="#fff" stroke-width="0.15"  xml:space="preserve">25</text>
<text x="804" y="714.5" font-size="9.5" fill="#fff" font-family='"Liberation Sans", sans-serif' textLength="68" lengthAdjust="spacingAndGlyphs" stroke="#fff" stroke-width="0.15"  xml:space="preserve">Distance in km</text>
<text transform="translate(606,601.5) rotate(-90)" font-size="13" fill="#fff" font-family='"Liberation Mono", monospace' textLength="95" lengthAdjust="spacingAndGlyphs" stroke="#fff" stroke-width="0.3">km above MSL</text>
<g shape-rendering="auto">
<path d="M663.0 677.9 L689.0 677.9 L692.9 673.2 L692.9 660.1 L873.9 660.1 L873.9 683.1 L663.0 683.1Z" fill="#b4b4b4"/>
<path d="M670.8 677.9 L679.4 677.9 L679.4 683.1 L670.8 683.1Z" fill="#a0460a"/>
<path d="M679.4 677.9 L687.2 677.9 L687.2 683.1 L679.4 683.1Z" fill="#d89a60"/>
<path d="M687.2 677.9 L689.0 677.9 L692.9 673.2 L692.9 660.1 L725.5 660.1 L721.6 683.1 L687.2 683.1Z" fill="#d89a60"/>
<path d="M687.2 677.9 L689.0 677.9 L692.9 673.2 L692.9 668.7 L700.7 666.1 L704.6 660.1 L711.1 660.1 L713.2 683.1 L687.2 683.1Z" fill="#fdb424"/>
<path d="M725.5 660.1 L742.4 660.1 L735.9 683.1 L721.6 683.1Z" fill="#a0460a"/>
<path d="M761.4 660.1 L873.9 660.1 L873.9 683.1 L754.9 683.1Z" fill="#005a14"/>
<path d="M786.7 660.1 L873.9 660.1 L873.9 683.1 L777.6 683.1 L782.8 670.0Z" fill="#0a8c14"/>
<path d="M799.7 660.1 L873.9 660.1 L873.9 683.1 L791.9 683.1 L797.1 670.0Z" fill="#0aaa14"/>
<path d="M806.2 683.1 L811.4 673.2 L820.5 683.1Z" fill="#00f000"/>
<path d="M850.5 660.1 L873.9 660.1 L873.9 683.1 L855.7 683.1Z" fill="#00f000"/>
<path d="M867.4 660.1 L873.9 660.1 L873.9 683.1Z" fill="#00b4ff"/>
</g>
<rect x="912" y="660" width="5" height="4" fill="#005a14" />
<rect x="912" y="664" width="5" height="3" fill="#0aaa14" />
<rect x="912" y="667" width="5" height="5" fill="#00f000" />
<rect x="912" y="672" width="5" height="8" fill="#0078ff" />
<rect x="912" y="680" width="5" height="3" fill="#00a0ff" />
<text x="584.5" y="404.5" font-size="18.5" fill="#ffff00" font-family='"Liberation Sans", sans-serif' textLength="175.5" lengthAdjust="spacingAndGlyphs" stroke="#ffff00" stroke-width="0.6"  xml:space="preserve">2-aug-1997,03:05:00</text>
<text x="771" y="404.5" font-size="18.5" fill="#fff" font-family='"Liberation Sans", sans-serif' textLength="313" lengthAdjust="spacingAndGlyphs" stroke="#fff" stroke-width="0.3"  xml:space="preserve">Planar cross-section plot.  Contour of</text>
<text x="584.5" y="431.2" font-size="18.5" fill="#fff" font-family='"Liberation Sans", sans-serif' textLength="228" lengthAdjust="spacingAndGlyphs" stroke="#fff" stroke-width="0.3"  xml:space="preserve">radialvelocity using: rhb_3d.</text>
<rect x="1050" y="412" width="84" height="1" fill="#9a9a9a" />
<text x="1052.4" y="427.9" font-size="13.5" fill="#fff" font-family='"Liberation Sans", sans-serif' textLength="74.7" lengthAdjust="spacingAndGlyphs" stroke="#fff" stroke-width="0.1"  xml:space="preserve">radialvelocity</text>
<rect x="1052" y="436" width="10" height="11" fill="#ff0000" />
<rect x="1052" y="447" width="10" height="11" fill="#cd0000" />
<rect x="1052" y="458" width="10" height="11" fill="#8b0000" />
<rect x="1052" y="469" width="10" height="11" fill="#dc5000" />
<rect x="1052" y="480" width="10" height="11" fill="#ff7f00" />
<rect x="1052" y="491" width="10" height="11" fill="#ff6060" />
<rect x="1052" y="502" width="10" height="11" fill="#ff8c8c" />
<rect x="1052" y="513" width="10" height="11" fill="#ffbcbc" />
<rect x="1052" y="524" width="10" height="11" fill="#ffff00" />
<rect x="1052" y="535" width="10" height="11" fill="#fdb424" />
<rect x="1052" y="546" width="10" height="11" fill="#d89a60" />
<rect x="1052" y="557" width="10" height="11" fill="#a0460a" />
<rect x="1052" y="568" width="10" height="11" fill="#b4b4b4" />
<rect x="1052" y="579" width="10" height="11" fill="#005014" />
<rect x="1052" y="590" width="10" height="11" fill="#0a8c14" />
<rect x="1052" y="601" width="10" height="11" fill="#0ab414" />
<rect x="1052" y="612" width="10" height="11" fill="#00e600" />
<rect x="1052" y="623" width="10" height="11" fill="#00b4ff" />
<rect x="1052" y="634" width="10" height="11" fill="#0078ff" />
<rect x="1052" y="645" width="10" height="11" fill="#0000e0" />
<rect x="1052" y="656" width="10" height="11" fill="#0014b4" />
<rect x="1052" y="667" width="10" height="11" fill="#000a8c" />
<rect x="1052" y="678" width="10" height="11" fill="#8c8cc0" />
<rect x="1052" y="689" width="10" height="11" fill="#5a5a96" />
<rect x="1052" y="700" width="10" height="11" fill="#787878" />
<text x="1067.7" y="445.8" font-size="12.3" fill="#fff" font-family='"Liberation Sans", sans-serif' textLength="22.5" lengthAdjust="spacingAndGlyphs" stroke="#fff" stroke-width="0.1"  xml:space="preserve">24.0</text>
<text x="1067.7" y="456.8" font-size="12.3" fill="#fff" font-family='"Liberation Sans", sans-serif' textLength="22.5" lengthAdjust="spacingAndGlyphs" stroke="#fff" stroke-width="0.1"  xml:space="preserve">22.0</text>
<text x="1067.7" y="467.8" font-size="12.3" fill="#fff" font-family='"Liberation Sans", sans-serif' textLength="22.5" lengthAdjust="spacingAndGlyphs" stroke="#fff" stroke-width="0.1"  xml:space="preserve">20.0</text>
<text x="1067.7" y="478.8" font-size="12.3" fill="#fff" font-family='"Liberation Sans", sans-serif' textLength="22.5" lengthAdjust="spacingAndGlyphs" stroke="#fff" stroke-width="0.1"  xml:space="preserve">18.0</text>
<text x="1067.7" y="489.8" font-size="12.3" fill="#fff" font-family='"Liberation Sans", sans-serif' textLength="22.5" lengthAdjust="spacingAndGlyphs" stroke="#fff" stroke-width="0.1"  xml:space="preserve">16.0</text>
<text x="1067.7" y="500.8" font-size="12.3" fill="#fff" font-family='"Liberation Sans", sans-serif' textLength="22.5" lengthAdjust="spacingAndGlyphs" stroke="#fff" stroke-width="0.1"  xml:space="preserve">14.0</text>
<text x="1067.7" y="511.8" font-size="12.3" fill="#fff" font-family='"Liberation Sans", sans-serif' textLength="22.5" lengthAdjust="spacingAndGlyphs" stroke="#fff" stroke-width="0.1"  xml:space="preserve">12.0</text>
<text x="1067.7" y="522.8" font-size="12.3" fill="#fff" font-family='"Liberation Sans", sans-serif' textLength="22.5" lengthAdjust="spacingAndGlyphs" stroke="#fff" stroke-width="0.1"  xml:space="preserve">10.0</text>
<text x="1067.7" y="533.8" font-size="12.3" fill="#fff" font-family='"Liberation Sans", sans-serif' textLength="16" lengthAdjust="spacingAndGlyphs" stroke="#fff" stroke-width="0.1"  xml:space="preserve">8.0</text>
<text x="1067.7" y="544.8" font-size="12.3" fill="#fff" font-family='"Liberation Sans", sans-serif' textLength="16" lengthAdjust="spacingAndGlyphs" stroke="#fff" stroke-width="0.1"  xml:space="preserve">6.0</text>
<text x="1067.7" y="555.8" font-size="12.3" fill="#fff" font-family='"Liberation Sans", sans-serif' textLength="16" lengthAdjust="spacingAndGlyphs" stroke="#fff" stroke-width="0.1"  xml:space="preserve">4.0</text>
<text x="1067.7" y="566.8" font-size="12.3" fill="#fff" font-family='"Liberation Sans", sans-serif' textLength="16" lengthAdjust="spacingAndGlyphs" stroke="#fff" stroke-width="0.1"  xml:space="preserve">2.0</text>
<text x="1067.7" y="577.8" font-size="12.3" fill="#fff" font-family='"Liberation Sans", sans-serif' textLength="16" lengthAdjust="spacingAndGlyphs" stroke="#fff" stroke-width="0.1"  xml:space="preserve">0.0</text>
<text x="1067.7" y="588.8" font-size="12.3" fill="#fff" font-family='"Liberation Sans", sans-serif' textLength="23.5" lengthAdjust="spacingAndGlyphs" stroke="#fff" stroke-width="0.1"  xml:space="preserve">-2.0</text>
<text x="1067.7" y="599.8" font-size="12.3" fill="#fff" font-family='"Liberation Sans", sans-serif' textLength="23.5" lengthAdjust="spacingAndGlyphs" stroke="#fff" stroke-width="0.1"  xml:space="preserve">-4.0</text>
<text x="1067.7" y="610.8" font-size="12.3" fill="#fff" font-family='"Liberation Sans", sans-serif' textLength="23.5" lengthAdjust="spacingAndGlyphs" stroke="#fff" stroke-width="0.1"  xml:space="preserve">-6.0</text>
<text x="1067.7" y="621.8" font-size="12.3" fill="#fff" font-family='"Liberation Sans", sans-serif' textLength="23.5" lengthAdjust="spacingAndGlyphs" stroke="#fff" stroke-width="0.1"  xml:space="preserve">-8.0</text>
<text x="1067.7" y="632.8" font-size="12.3" fill="#fff" font-family='"Liberation Sans", sans-serif' textLength="30" lengthAdjust="spacingAndGlyphs" stroke="#fff" stroke-width="0.1"  xml:space="preserve">-10.0</text>
<text x="1067.7" y="643.8" font-size="12.3" fill="#fff" font-family='"Liberation Sans", sans-serif' textLength="30" lengthAdjust="spacingAndGlyphs" stroke="#fff" stroke-width="0.1"  xml:space="preserve">-12.0</text>
<text x="1067.7" y="654.8" font-size="12.3" fill="#fff" font-family='"Liberation Sans", sans-serif' textLength="30" lengthAdjust="spacingAndGlyphs" stroke="#fff" stroke-width="0.1"  xml:space="preserve">-14.0</text>
<text x="1067.7" y="665.8" font-size="12.3" fill="#fff" font-family='"Liberation Sans", sans-serif' textLength="30" lengthAdjust="spacingAndGlyphs" stroke="#fff" stroke-width="0.1"  xml:space="preserve">-16.0</text>
<text x="1067.7" y="676.8" font-size="12.3" fill="#fff" font-family='"Liberation Sans", sans-serif' textLength="30" lengthAdjust="spacingAndGlyphs" stroke="#fff" stroke-width="0.1"  xml:space="preserve">-18.0</text>
<text x="1067.7" y="687.8" font-size="12.3" fill="#fff" font-family='"Liberation Sans", sans-serif' textLength="30" lengthAdjust="spacingAndGlyphs" stroke="#fff" stroke-width="0.1"  xml:space="preserve">-20.0</text>
<text x="1067.7" y="698.8" font-size="12.3" fill="#fff" font-family='"Liberation Sans", sans-serif' textLength="30" lengthAdjust="spacingAndGlyphs" stroke="#fff" stroke-width="0.1"  xml:space="preserve">-22.0</text>
<text x="1067.7" y="709.8" font-size="12.3" fill="#fff" font-family='"Liberation Sans", sans-serif' textLength="30" lengthAdjust="spacingAndGlyphs" stroke="#fff" stroke-width="0.1"  xml:space="preserve">-24.0</text>
<rect x="1050" y="719" width="84" height="1" fill="#9a9a9a" />
<rect x="579" y="720" width="46" height="48" fill="#a0a0a4" />
<rect x="580" y="721" width="44" height="46" fill="#191970" />
<text transform="translate(583.5,761.5) scale(1.18,1)" font-size="47" font-weight="200" fill="#ffff00" font-family='"DejaVu Sans", "Liberation Sans", sans-serif'>Z</text>
<rect x="626" y="720" width="46" height="48" fill="#a0a0a4" />
<rect x="627" y="721" width="44" height="46" fill="#191970" />
<text x="649" y="729.3" font-size="7.6" fill="#ffff00" font-family='"Liberation Sans", sans-serif' textLength="24" lengthAdjust="spacingAndGlyphs" text-anchor="middle" font-weight="bold" stroke="#ffff00" stroke-width="0.15"  xml:space="preserve">CROSS</text>
<text x="649" y="764.3" font-size="7.6" fill="#ffff00" font-family='"Liberation Sans", sans-serif' textLength="30" lengthAdjust="spacingAndGlyphs" text-anchor="middle" font-weight="bold" stroke="#ffff00" stroke-width="0.15"  xml:space="preserve">SECTION</text>
<g fill="none" stroke="#ffff00" stroke-width="1"><rect x="644.5" y="730.5" width="22" height="19"/><g shape-rendering="auto"><path d="M630.5 738.5 L644.5 730.5 M652.5 738.5 L666.5 730.5 M652.5 757.5 L666.5 749.5"/><path d="M630.5 757.5 L644.5 749.5" stroke-dasharray="1 1.5"/></g></g>
<path d="M639 734 L660 732 L660 753 L639 756Z" fill="#191970"/><path d="M639 734 L660 732 L660 753 L639 756Z" fill="url(#ditY)"/>
<path d="M639 734 L660 732 L660 753 L639 756Z" fill="none" stroke="#ffff00" stroke-width="1" shape-rendering="auto"/>
<rect x="630.5" y="738.5" width="22" height="19" fill="none" stroke="#ffff00" stroke-width="1"/>
<rect x="673" y="720" width="46" height="48" fill="#a8a8a8" />
<rect x="674" y="721" width="44" height="46" fill="#696969" />
<text x="696" y="729.3" font-size="7.6" fill="#dcdcdc" font-family='"Liberation Sans", sans-serif' textLength="24" lengthAdjust="spacingAndGlyphs" text-anchor="middle" font-weight="bold" stroke="#dcdcdc" stroke-width="0.15"  xml:space="preserve">CROSS</text>
<text x="696" y="764.3" font-size="7.6" fill="#dcdcdc" font-family='"Liberation Sans", sans-serif' textLength="30" lengthAdjust="spacingAndGlyphs" text-anchor="middle" font-weight="bold" stroke="#dcdcdc" stroke-width="0.15"  xml:space="preserve">SECTION</text>
<g fill="none" stroke="#dcdcdc" stroke-width="1"><rect x="691.5" y="730.5" width="22" height="19"/><g shape-rendering="auto"><path d="M677.5 738.5 L691.5 730.5 M699.5 738.5 L713.5 730.5 M699.5 757.5 L713.5 749.5"/><path d="M677.5 757.5 L691.5 749.5" stroke-dasharray="1 1.5"/></g></g>
<path d="M686 734 L707 732 L707 753 L686 756Z" fill="#696969"/><path d="M686 734 L707 732 L707 753 L686 756Z" fill="url(#ditG)"/>
<path d="M686 734 L707 732 L707 753 L686 756Z" fill="none" stroke="#dcdcdc" stroke-width="1" shape-rendering="auto"/>
<rect x="677.5" y="738.5" width="22" height="19" fill="none" stroke="#dcdcdc" stroke-width="1"/>
<rect x="720" y="720" width="46" height="48" fill="#a8a8a8" />
<rect x="721" y="721" width="44" height="46" fill="#696969" />
<text x="743" y="729.3" font-size="7.6" fill="#dcdcdc" font-family='"Liberation Sans", sans-serif' textLength="24" lengthAdjust="spacingAndGlyphs" text-anchor="middle" font-weight="bold" stroke="#dcdcdc" stroke-width="0.15"  xml:space="preserve">CROSS</text>
<text x="743" y="764.3" font-size="7.6" fill="#dcdcdc" font-family='"Liberation Sans", sans-serif' textLength="30" lengthAdjust="spacingAndGlyphs" text-anchor="middle" font-weight="bold" stroke="#dcdcdc" stroke-width="0.15"  xml:space="preserve">SECTION</text>
<g fill="none" stroke="#dcdcdc" stroke-width="1"><rect x="738.5" y="730.5" width="22" height="19"/><g shape-rendering="auto"><path d="M724.5 738.5 L738.5 730.5 M746.5 738.5 L760.5 730.5 M746.5 757.5 L760.5 749.5"/><path d="M724.5 757.5 L738.5 749.5" stroke-dasharray="1 1.5"/></g></g>
<path d="M733 734 L754 732 L754 753 L733 756Z" fill="#696969"/><path d="M733 734 L754 732 L754 753 L733 756Z" fill="url(#ditG)"/>
<path d="M733 734 L754 732 L754 753 L733 756Z" fill="none" stroke="#dcdcdc" stroke-width="1" shape-rendering="auto"/>
<rect x="724.5" y="738.5" width="22" height="19" fill="none" stroke="#dcdcdc" stroke-width="1"/>
<line x1="573" x2="1135" y1="386.5" y2="386.5" stroke="#fff" stroke-width="1" stroke-dasharray="1 1"/>
<line x1="1134.5" x2="1134.5" y1="387" y2="771" stroke="#fff" stroke-width="1" stroke-dasharray="1 1"/>
<line x1="575" x2="1135" y1="770.5" y2="770.5" stroke="#fff" stroke-width="1" stroke-dasharray="1 1"/>
<line x1="573.5" x2="573.5" y1="388" y2="771" stroke="#fff" stroke-width="1" stroke-dasharray="1 1"/>
</svg>
</body></html>
